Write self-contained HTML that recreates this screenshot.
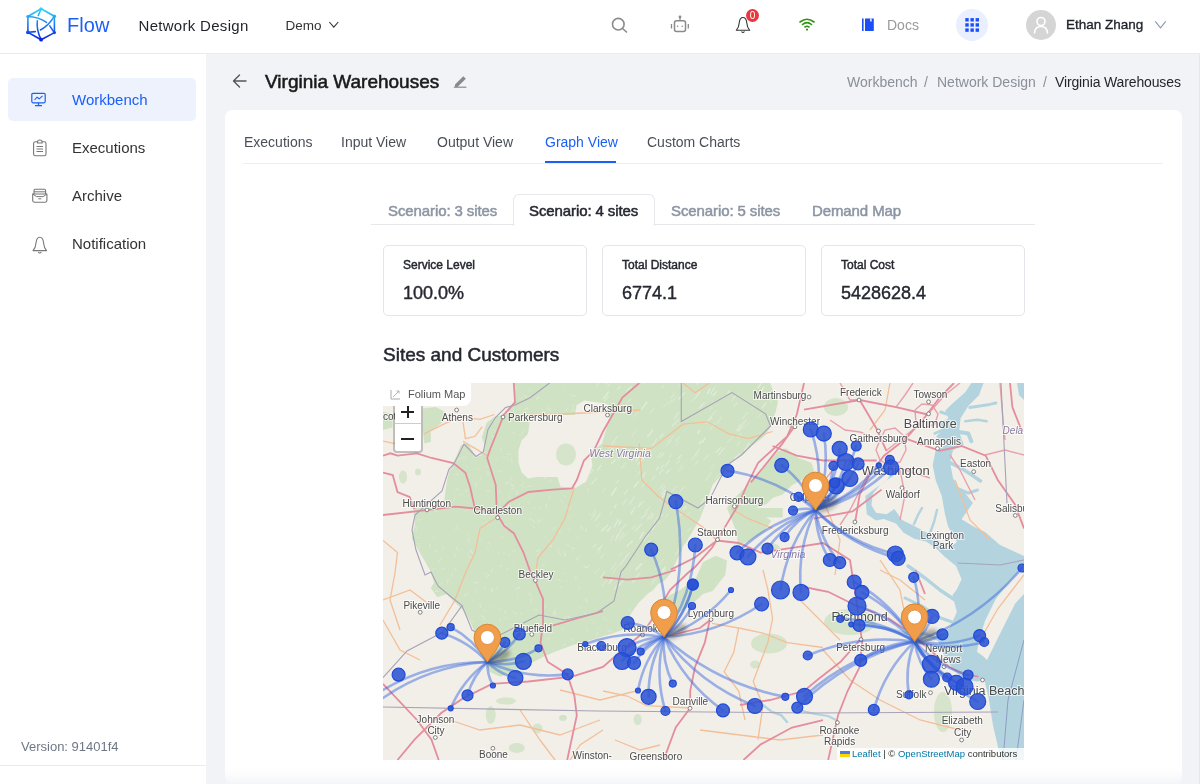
<!DOCTYPE html>
<html><head><meta charset="utf-8">
<style>
*{box-sizing:border-box;margin:0;padding:0}
html,body{width:1200px;height:784px;overflow:hidden;background:#f2f3f7;font-family:"Liberation Sans",sans-serif;color:#1f2329}
.abs{position:absolute;white-space:nowrap;line-height:1}
svg{position:absolute;overflow:visible}
#hdr{position:absolute;left:0;top:0;width:1200px;height:54px;background:#fff;border-bottom:1px solid #ebecf0}
#side{position:absolute;left:0;top:54px;width:206px;height:730px;background:#fff}
#card{position:absolute;left:225px;top:110px;width:957px;height:673px;background:#fff;border-radius:7px}
.st{font-size:15px;-webkit-text-stroke:0.5px;color:#8c95a3;letter-spacing:-0.1px}
.ml{font-size:12px;-webkit-text-stroke:0.45px;color:#262730}
.mv{font-size:18px;color:#262730;-webkit-text-stroke:0.4px}
.mc{position:absolute;top:245px;width:204px;height:71px;border:1px solid #e4e5ea;border-radius:5px;background:#fff}
</style></head>
<body>
<div id="root" style="position:absolute;left:0;top:0;width:1200px;height:784px;overflow:hidden;will-change:transform;background:#f2f3f7">
<div id="hdr">
  <!-- logo -->
  <svg style="left:0;top:0" width="60" height="54" viewBox="0 0 60 54">
    <defs><linearGradient id="lg" x1="0" y1="8" x2="0" y2="40" gradientUnits="userSpaceOnUse"><stop offset="0" stop-color="#30d8f8"/><stop offset="0.5" stop-color="#1f7cf2"/><stop offset="1" stop-color="#0a1ee0"/></linearGradient></defs>
    <g fill="none" stroke="url(#lg)" stroke-width="1.6" stroke-linecap="round" stroke-linejoin="round">
      <path d="M41.1 8.8 L54.4 16.2 L54.4 32.6 L41.1 39.7 L27.9 32.3 L27.9 16.5 Z"/>
      <path d="M27.9 16.5 Q38.5 16.8 46.5 22.4"/>
      <path d="M54.4 16.2 Q48.5 26 40.4 30"/>
      <path d="M41.1 39.7 Q36.3 30 37.3 20.8"/>
      <path d="M41.1 8.8 L38.3 15.5"/>
      <path d="M49.8 25.9 L53.6 31.6"/>
      <path d="M27.9 32.3 L35.3 31.6"/>
    </g>
    <g fill="url(#lg)"><circle cx="41.1" cy="8.8" r="1.6"/><circle cx="54.4" cy="16.2" r="1.6"/><circle cx="54.4" cy="32.6" r="1.6"/><circle cx="41.1" cy="39.7" r="1.9"/><circle cx="27.9" cy="32.3" r="1.9"/><circle cx="27.9" cy="16.5" r="1.6"/></g>
  </svg>
  <div class="abs" style="left:67px;top:15.3px;font-size:20px;color:#1b5ff5;letter-spacing:0.1px">Flow</div>
  <div class="abs" style="left:138.5px;top:18px;font-size:15px;color:#1f2329;letter-spacing:0.3px">Network Design</div>
  <div class="abs" style="left:285.5px;top:18.5px;font-size:13.5px;color:#333">Demo</div>
  <svg style="left:328px;top:21px" width="12" height="8"><path d="M1.3 1 L5.8 6.2 L10.3 1" fill="none" stroke="#333" stroke-width="1.1"/></svg>
  <!-- search -->
  <svg style="left:610px;top:15px" width="20" height="20"><circle cx="8.3" cy="9.2" r="5.8" fill="none" stroke="#8a8a8a" stroke-width="1.6"/><path d="M12.5 13.5 L16.5 17" stroke="#8a8a8a" stroke-width="1.6" stroke-linecap="round"/></svg>
  <!-- robot -->
  <svg style="left:670px;top:14px" width="20" height="20"><rect x="4.5" y="6.8" width="11" height="10.8" rx="2" fill="none" stroke="#8a8a8a" stroke-width="1.5"/><circle cx="10" cy="3" r="1.4" fill="#8a8a8a"/><path d="M10 4 V6.8" stroke="#8a8a8a" stroke-width="1.2"/><path d="M1.5 10 V14.5 M18.3 10 V14.5" stroke="#8a8a8a" stroke-width="1.3"/><circle cx="7.6" cy="12.3" r="0.8" fill="#8a8a8a"/><circle cx="12.2" cy="12.3" r="0.8" fill="#8a8a8a"/></svg>
  <!-- bell -->
  <svg style="left:734px;top:15px" width="18" height="20"><path d="M9 2.5 C6 2.5 5.5 5 5.2 8 C5 11 4.5 13 2.3 15.3 H15.7 C13.5 13 13 11 12.8 8 C12.5 5 12 2.5 9 2.5 Z" fill="none" stroke="#333" stroke-width="1.1" stroke-linejoin="round"/><path d="M7.5 16.5 Q9 18.6 10.5 16.5" fill="none" stroke="#333" stroke-width="1.1"/></svg>
  <div class="abs" style="left:746px;top:9px;width:13px;height:13px;border-radius:50%;background:#e8383d;color:#fff;font-size:10px;text-align:center;line-height:13px">0</div>
  <!-- wifi -->
  <svg style="left:798px;top:17px" width="18" height="14"><g fill="none" stroke="#2e9313" stroke-width="1.6" stroke-linecap="round"><path d="M2 5 Q9 -0.5 16 5"/><path d="M4.5 7.5 Q9 3.8 13.5 7.5"/><path d="M7 10 Q9 8.5 11 10"/></g><circle cx="9" cy="12.6" r="1.1" fill="#2e9313"/></svg>
  <!-- docs -->
  <svg style="left:860px;top:17px" width="16" height="16"><rect x="2" y="1.5" width="1.6" height="12.5" fill="#1b4ff5"/><rect x="5" y="1.5" width="8.8" height="12.5" fill="#1b4ff5"/><rect x="10.2" y="1.5" width="1.4" height="3" fill="#fff"/></svg>
  <div class="abs" style="left:887px;top:18px;font-size:14px;color:#9a9a9a">Docs</div>
  <!-- apps -->
  <div class="abs" style="left:956px;top:9px;width:32px;height:32px;border-radius:50%;background:#e9effe"></div>
  <svg style="left:964px;top:17px" width="16" height="16"><g fill="#1b4ff5"><rect x="1.30" y="1.10" width="3.4" height="3.4"/><rect x="6.45" y="1.10" width="3.4" height="3.4"/><rect x="11.60" y="1.10" width="3.4" height="3.4"/><rect x="1.30" y="6.25" width="3.4" height="3.4"/><rect x="6.45" y="6.25" width="3.4" height="3.4"/><rect x="11.60" y="6.25" width="3.4" height="3.4"/><rect x="1.30" y="11.40" width="3.4" height="3.4"/><rect x="6.45" y="11.40" width="3.4" height="3.4"/><rect x="11.60" y="11.40" width="3.4" height="3.4"/></g></svg>
  <!-- avatar -->
  <div class="abs" style="left:1026px;top:10px;width:30px;height:30px;border-radius:50%;background:#d5d5d5"></div>
  <svg style="left:1026px;top:10px" width="30" height="30"><circle cx="15" cy="11.5" r="4" fill="none" stroke="#fff" stroke-width="1.6"/><path d="M8.5 23 Q9 16.5 15 16.5 Q21 16.5 21.5 23" fill="none" stroke="#fff" stroke-width="1.6" stroke-linecap="round"/></svg>
  <div class="abs" style="left:1066px;top:18px;font-size:13.5px;color:#1f2329;-webkit-text-stroke:0.35px">Ethan Zhang</div>
  <svg style="left:1154px;top:20px" width="13" height="10"><path d="M1.3 1.3 L6.5 7.8 L11.7 1.3" fill="none" stroke="#8c96b0" stroke-width="1.1"/></svg>
</div>

<div id="side">
  <div class="abs" style="left:8px;top:23.5px;width:188px;height:43px;background:#edf2fd;border-radius:5px"></div>
  <!-- monitor icon -->
  <svg style="left:30px;top:38px" width="18" height="16"><rect x="1.8" y="1.3" width="13.4" height="9.5" rx="1.2" fill="none" stroke="#1b5ff5" stroke-width="1.2"/><path d="M4.5 8 L7 5.2 L9.3 6.8 L12.5 3.8" fill="none" stroke="#1b5ff5" stroke-width="1.1"/><path d="M8.5 10.8 V13.2 M5 13.6 H12" stroke="#1b5ff5" stroke-width="1.2"/></svg>
  <div class="abs" style="left:72px;top:38px;font-size:15px;color:#1b5ff5">Workbench</div>
  <!-- clipboard -->
  <svg style="left:31px;top:85px" width="18" height="18"><rect x="2.6" y="2.8" width="12.4" height="14" rx="1.8" fill="none" stroke="#777" stroke-width="1.1"/><path d="M6.5 3 Q6.5 1 8.8 1 Q11.1 1 11.1 3 V4 H6.5 Z" fill="#fff" stroke="#777" stroke-width="1.1"/><path d="M5.5 7.5 H12 M5.5 10 H12 M5.5 12.5 H12" stroke="#777" stroke-width="1"/></svg>
  <div class="abs" style="left:72px;top:86px;font-size:15px;color:#333">Executions</div>
  <!-- archive -->
  <svg style="left:31px;top:133px" width="18" height="18"><path d="M1.7 7 V13.6 Q1.7 15.2 3.3 15.2 H14.3 Q15.9 15.2 15.9 13.6 V7 Z" fill="none" stroke="#777" stroke-width="1.1" stroke-linejoin="round"/><path d="M3 7 V3.5 Q3 2.2 4.3 2.2 H13.3 Q14.6 2.2 14.6 3.5 V7" fill="none" stroke="#777" stroke-width="1.1"/><path d="M3 4.8 H14.6" stroke="#777" stroke-width="1"/><path d="M1.7 7 L5.5 9.6 H12.1 L15.9 7" fill="none" stroke="#777" stroke-width="1"/><path d="M7.3 11.8 H10.3" stroke="#777" stroke-width="1"/></svg>
  <div class="abs" style="left:72px;top:134px;font-size:15px;color:#333">Archive</div>
  <!-- bell -->
  <svg style="left:31px;top:181px" width="18" height="20"><path d="M8.8 2.2 C5.8 2.2 5.3 4.8 5 8 C4.8 11 4.3 13.3 2 15.6 H15.6 C13.3 13.3 12.8 11 12.6 8 C12.3 4.8 11.8 2.2 8.8 2.2 Z" fill="none" stroke="#777" stroke-width="1.1" stroke-linejoin="round"/><path d="M7.2 17 Q8.8 19 10.4 17" fill="none" stroke="#777" stroke-width="1.1"/></svg>
  <div class="abs" style="left:72px;top:182px;font-size:15px;color:#333">Notification</div>
  <div class="abs" style="left:21px;top:686px;font-size:13px;color:#6f7787">Version: 91401f4</div>
  <div class="abs" style="left:0;top:711px;width:206px;height:1px;background:#ececec"></div>
</div>

<!-- title row -->
<svg style="left:231px;top:72px" width="18" height="18"><path d="M15 9 H3 M8.5 3 L2.5 9 L8.5 15" fill="none" stroke="#555" stroke-width="1.4" stroke-linecap="round" stroke-linejoin="round"/></svg>
<div class="abs" style="left:265px;top:72px;font-size:19px;color:#1a1a1a;-webkit-text-stroke:0.55px">Virginia Warehouses</div>
<svg style="left:452px;top:74px" width="16" height="16"><path d="M3 10.5 L11.3 2.2 L13.8 4.7 L5.5 13 H3 Z" fill="#8a8a8a"/><rect x="1.8" y="12.6" width="12.6" height="1.2" fill="#8a8a8a"/></svg>
<div class="abs" style="left:847px;top:75px;font-size:14px;color:#8a8f99">Workbench</div>
<div class="abs" style="left:924px;top:75px;font-size:14px;color:#8a8f99">/</div>
<div class="abs" style="left:937px;top:75px;font-size:14px;color:#8a8f99">Network Design</div>
<div class="abs" style="left:1043px;top:75px;font-size:14px;color:#8a8f99">/</div>
<div class="abs" style="left:1055px;top:75px;font-size:14px;color:#1f2329;letter-spacing:-0.14px">Virginia Warehouses</div>

<div id="card"></div>
<div class="abs" style="left:1199px;top:54px;width:1px;height:730px;background:#e6e7ec"></div>
<!-- nav tabs -->
<div class="abs" style="left:244px;top:135px;font-size:14px;color:#4a4f57">Executions</div>
<div class="abs" style="left:341px;top:135px;font-size:14px;color:#4a4f57">Input View</div>
<div class="abs" style="left:437px;top:135px;font-size:14px;color:#4a4f57">Output View</div>
<div class="abs" style="left:545px;top:135px;font-size:14px;color:#1b5ff5">Graph View</div>
<div class="abs" style="left:647px;top:135px;font-size:14px;color:#4a4f57">Custom Charts</div>
<div class="abs" style="left:243px;top:163px;width:920px;height:1px;background:#eceef1"></div>
<div class="abs" style="left:545px;top:161px;width:71px;height:2px;background:#1b5ff5"></div>

<!-- scenario tabs -->
<div class="abs" style="left:371px;top:224px;width:664px;height:1px;background:#e6e8ec"></div>
<div class="abs" style="left:513px;top:193.5px;width:142px;height:32px;border:1px solid #e6e8ec;border-bottom:none;border-radius:6px 6px 0 0;background:#fff"></div>
<div class="abs st" style="left:388px;top:203px">Scenario: 3 sites</div>
<div class="abs st" style="left:529px;top:203px;color:#262730">Scenario: 4 sites</div>
<div class="abs st" style="left:671px;top:203px">Scenario: 5 sites</div>
<div class="abs st" style="left:812px;top:203px">Demand Map</div>

<!-- metrics -->
<div class="mc" style="left:383px"></div>
<div class="mc" style="left:602px"></div>
<div class="mc" style="left:821px"></div>
<div class="abs ml" style="left:403px;top:259px">Service Level</div>
<div class="abs mv" style="left:403px;top:284px">100.0%</div>
<div class="abs ml" style="left:622px;top:259px">Total Distance</div>
<div class="abs mv" style="left:622px;top:284px">6774.1</div>
<div class="abs ml" style="left:841px;top:259px">Total Cost</div>
<div class="abs mv" style="left:841px;top:284px">5428628.4</div>

<div class="abs" style="left:383px;top:345px;font-size:19px;color:#262730;-webkit-text-stroke:0.5px">Sites and Customers</div>

<div class="abs" style="left:225px;top:768px;width:957px;height:16px;background:linear-gradient(rgba(250,250,252,0),rgba(244,245,248,0.9))"></div>
<!-- MAP -->
<div id="map" style="position:absolute;left:383px;top:383px;width:641px;height:377px;background:#f2efe9;overflow:hidden">
<svg width="641" height="377" viewBox="383 383 641 377" style="position:absolute;left:0;top:0">
<defs><filter id="blur" x="-50%" y="-50%" width="200%" height="200%"><feGaussianBlur stdDeviation="2"/></filter></defs>
<rect x="383" y="383" width="641" height="377" fill="#f2efe9"/>
<polygon points="513.7,383.0 770.0,383.0 778.0,402.0 773.0,422.8 765.0,435.6 750.8,446.7 739.7,456.3 731.7,462.7 723.7,472.2 712.6,485.0 700.0,518.7 683.0,547.8 676.0,562.0 670.8,573.0 665.0,580.0 657.7,584.5 653.3,590.0 648.3,593.3 638.3,603.3 630.0,615.0 626.7,628.3 613.3,633.3 596.7,638.3 573.3,645.0 555.0,651.7 543.3,656.7 521.7,668.3 500.0,676.7 490.0,672.0 484.0,660.0 478.0,645.0 475.4,633.0 469.0,619.6 462.7,610.0 453.1,600.4 446.7,594.0 437.2,597.2 430.8,587.7 434.0,583.0 430.8,571.7 424.4,560.6 419.7,552.6 411.7,538.3 414.9,524.0 413.3,508.0 443.6,506.0 446.7,481.8 450.0,469.0 456.3,456.3 461.0,445.0 467.5,443.6 472.2,450.0 475.4,458.0 481.8,454.7 485.0,446.7 481.8,437.2 486.6,422.8 494.6,416.5 504.0,415.0 510.5,407.0 515.3,399.0" fill="#d0e2c4"/>
<polygon points="515.3,421.2 523.2,419.7 529.6,422.8 528.0,434.0 521.6,440.4 518.5,450.0 518.5,462.7 521.6,472.2 528.0,478.6 536.0,477.0 543.0,477.0 557.3,477.0 560.5,486.6 574.9,488.2 586.0,481.8 592.4,465.9 590.8,453.0 602.0,443.6 606.7,427.6 610.0,414.9 606.7,403.7 584.4,400.5 576.5,405.3 574.9,414.9 543.0,414.9" fill="#f2efe9"/>
<polygon points="778.0,451.5 785.9,448.3 798.6,458.0 811.4,462.7 814.6,472.2 805.0,478.6 792.2,485.0 782.7,494.6 773.0,497.7 766.7,504.0 755.6,508.0 726.9,508.0 734.9,497.7 747.6,485.0 760.4,472.2 770.0,459.5" fill="#d0e2c4"/>
<polygon points="742.8,517.6 760.4,514.4 771.5,520.7 763.6,532.0 750.8,540.0 738.0,546.2 736.5,532.0 726.9,508.0 755.6,508.0 782.7,508.0 782.7,517.6" fill="#d0e2c4"/>
<polygon points="703.0,562.0 715.7,555.8 727.0,560.6 725.3,575.0 712.6,590.9 703.0,594.0 690.0,606.0 680.0,612.0 668.0,615.0 660.0,600.0 680.0,590.0 696.0,578.0" fill="#d0e2c4"/>
<polygon points="422.8,408.5 435.6,407.0 445.0,411.7 442.0,422.8 430.8,430.8 430.8,442.0 424.4,443.6 422.8,430.8" fill="#d0e2c4"/>
<polygon points="383.0,411.7 392.6,414.0 392.6,427.6 383.0,430.0" fill="#d0e2c4"/>
<line x1="668.9" y1="404.5" x2="672.5" y2="399.5" stroke="#f4f6ee" stroke-opacity="0.27" stroke-width="1.2" stroke-linecap="round"/>
<line x1="429.6" y1="511.8" x2="427.8" y2="510.6" stroke="#f4f6ee" stroke-opacity="0.23" stroke-width="1.5" stroke-linecap="round"/>
<line x1="463.3" y1="449.3" x2="460.2" y2="450.4" stroke="#f4f6ee" stroke-opacity="0.27" stroke-width="1.1" stroke-linecap="round"/>
<line x1="535.3" y1="625.4" x2="537.4" y2="626.5" stroke="#f4f6ee" stroke-opacity="0.28" stroke-width="1.1" stroke-linecap="round"/>
<line x1="628.6" y1="401.6" x2="630.5" y2="398.8" stroke="#f4f6ee" stroke-opacity="0.45" stroke-width="1.1" stroke-linecap="round"/>
<line x1="537.5" y1="556.9" x2="538.4" y2="554.1" stroke="#f4f6ee" stroke-opacity="0.31" stroke-width="1.4" stroke-linecap="round"/>
<line x1="510.2" y1="553.6" x2="508.0" y2="555.8" stroke="#f4f6ee" stroke-opacity="0.30" stroke-width="1.0" stroke-linecap="round"/>
<line x1="578.1" y1="607.9" x2="580.4" y2="607.7" stroke="#f4f6ee" stroke-opacity="0.16" stroke-width="1.3" stroke-linecap="round"/>
<line x1="641.2" y1="518.5" x2="647.0" y2="512.9" stroke="#f4f6ee" stroke-opacity="0.39" stroke-width="1.3" stroke-linecap="round"/>
<line x1="438.7" y1="591.3" x2="435.4" y2="591.5" stroke="#f4f6ee" stroke-opacity="0.31" stroke-width="1.0" stroke-linecap="round"/>
<line x1="565.5" y1="581.6" x2="567.4" y2="581.1" stroke="#f4f6ee" stroke-opacity="0.18" stroke-width="0.9" stroke-linecap="round"/>
<line x1="465.4" y1="456.5" x2="463.5" y2="458.6" stroke="#f4f6ee" stroke-opacity="0.17" stroke-width="1.2" stroke-linecap="round"/>
<line x1="523.6" y1="506.3" x2="521.6" y2="508.2" stroke="#f4f6ee" stroke-opacity="0.34" stroke-width="0.9" stroke-linecap="round"/>
<line x1="483.7" y1="451.9" x2="486.2" y2="451.7" stroke="#f4f6ee" stroke-opacity="0.27" stroke-width="1.0" stroke-linecap="round"/>
<line x1="559.0" y1="551.2" x2="560.4" y2="554.8" stroke="#f4f6ee" stroke-opacity="0.25" stroke-width="1.3" stroke-linecap="round"/>
<line x1="678.7" y1="399.0" x2="684.5" y2="392.9" stroke="#f4f6ee" stroke-opacity="0.51" stroke-width="1.4" stroke-linecap="round"/>
<line x1="568.0" y1="501.5" x2="569.5" y2="503.1" stroke="#f4f6ee" stroke-opacity="0.16" stroke-width="0.9" stroke-linecap="round"/>
<line x1="496.4" y1="431.2" x2="493.9" y2="430.3" stroke="#f4f6ee" stroke-opacity="0.15" stroke-width="0.9" stroke-linecap="round"/>
<line x1="454.6" y1="491.0" x2="453.1" y2="492.5" stroke="#f4f6ee" stroke-opacity="0.27" stroke-width="0.9" stroke-linecap="round"/>
<line x1="513.4" y1="486.2" x2="511.4" y2="484.3" stroke="#f4f6ee" stroke-opacity="0.32" stroke-width="1.6" stroke-linecap="round"/>
<line x1="596.7" y1="526.7" x2="598.6" y2="523.7" stroke="#f4f6ee" stroke-opacity="0.35" stroke-width="1.0" stroke-linecap="round"/>
<line x1="738.3" y1="430.9" x2="740.5" y2="428.8" stroke="#f4f6ee" stroke-opacity="0.41" stroke-width="0.9" stroke-linecap="round"/>
<line x1="626.8" y1="391.0" x2="631.3" y2="386.8" stroke="#f4f6ee" stroke-opacity="0.51" stroke-width="1.4" stroke-linecap="round"/>
<line x1="516.8" y1="491.9" x2="516.5" y2="494.2" stroke="#f4f6ee" stroke-opacity="0.26" stroke-width="1.4" stroke-linecap="round"/>
<line x1="503.4" y1="536.7" x2="500.8" y2="536.2" stroke="#f4f6ee" stroke-opacity="0.16" stroke-width="1.0" stroke-linecap="round"/>
<line x1="516.1" y1="588.7" x2="519.8" y2="587.4" stroke="#f4f6ee" stroke-opacity="0.34" stroke-width="1.6" stroke-linecap="round"/>
<line x1="501.0" y1="450.4" x2="500.3" y2="448.1" stroke="#f4f6ee" stroke-opacity="0.27" stroke-width="1.5" stroke-linecap="round"/>
<line x1="448.1" y1="579.2" x2="447.3" y2="582.9" stroke="#f4f6ee" stroke-opacity="0.30" stroke-width="1.2" stroke-linecap="round"/>
<line x1="484.6" y1="617.4" x2="483.8" y2="619.9" stroke="#f4f6ee" stroke-opacity="0.34" stroke-width="1.1" stroke-linecap="round"/>
<line x1="697.7" y1="433.5" x2="699.7" y2="430.3" stroke="#f4f6ee" stroke-opacity="0.52" stroke-width="1.4" stroke-linecap="round"/>
<line x1="551.7" y1="546.0" x2="549.4" y2="545.7" stroke="#f4f6ee" stroke-opacity="0.34" stroke-width="1.3" stroke-linecap="round"/>
<line x1="737.2" y1="445.7" x2="739.8" y2="442.0" stroke="#f4f6ee" stroke-opacity="0.32" stroke-width="1.3" stroke-linecap="round"/>
<line x1="516.2" y1="507.4" x2="514.2" y2="508.7" stroke="#f4f6ee" stroke-opacity="0.22" stroke-width="1.2" stroke-linecap="round"/>
<line x1="610.6" y1="541.0" x2="613.7" y2="535.6" stroke="#f4f6ee" stroke-opacity="0.38" stroke-width="0.9" stroke-linecap="round"/>
<line x1="482.2" y1="523.6" x2="485.5" y2="524.8" stroke="#f4f6ee" stroke-opacity="0.22" stroke-width="1.2" stroke-linecap="round"/>
<line x1="456.4" y1="549.4" x2="456.8" y2="546.9" stroke="#f4f6ee" stroke-opacity="0.30" stroke-width="1.2" stroke-linecap="round"/>
<line x1="634.1" y1="608.7" x2="637.7" y2="607.4" stroke="#f4f6ee" stroke-opacity="0.27" stroke-width="1.2" stroke-linecap="round"/>
<line x1="614.7" y1="588.7" x2="618.3" y2="584.3" stroke="#f4f6ee" stroke-opacity="0.39" stroke-width="1.6" stroke-linecap="round"/>
<line x1="742.6" y1="423.7" x2="744.9" y2="420.8" stroke="#f4f6ee" stroke-opacity="0.27" stroke-width="1.0" stroke-linecap="round"/>
<line x1="443.5" y1="581.8" x2="440.7" y2="584.0" stroke="#f4f6ee" stroke-opacity="0.18" stroke-width="1.4" stroke-linecap="round"/>
<line x1="672.5" y1="425.5" x2="678.5" y2="419.8" stroke="#f4f6ee" stroke-opacity="0.32" stroke-width="1.6" stroke-linecap="round"/>
<line x1="570.3" y1="527.7" x2="568.4" y2="531.2" stroke="#f4f6ee" stroke-opacity="0.18" stroke-width="1.1" stroke-linecap="round"/>
<line x1="616.1" y1="483.7" x2="618.5" y2="480.3" stroke="#f4f6ee" stroke-opacity="0.47" stroke-width="0.8" stroke-linecap="round"/>
<line x1="631.1" y1="513.8" x2="632.9" y2="511.3" stroke="#f4f6ee" stroke-opacity="0.44" stroke-width="1.2" stroke-linecap="round"/>
<line x1="455.9" y1="461.9" x2="455.5" y2="463.9" stroke="#f4f6ee" stroke-opacity="0.20" stroke-width="0.9" stroke-linecap="round"/>
<line x1="734.4" y1="459.8" x2="737.2" y2="457.1" stroke="#f4f6ee" stroke-opacity="0.42" stroke-width="1.4" stroke-linecap="round"/>
<line x1="683.4" y1="509.3" x2="685.9" y2="506.9" stroke="#f4f6ee" stroke-opacity="0.44" stroke-width="1.4" stroke-linecap="round"/>
<line x1="592.0" y1="483.7" x2="596.5" y2="479.3" stroke="#f4f6ee" stroke-opacity="0.33" stroke-width="0.9" stroke-linecap="round"/>
<line x1="620.5" y1="453.8" x2="622.5" y2="450.7" stroke="#f4f6ee" stroke-opacity="0.27" stroke-width="1.0" stroke-linecap="round"/>
<line x1="711.2" y1="469.1" x2="714.5" y2="464.1" stroke="#f4f6ee" stroke-opacity="0.35" stroke-width="0.8" stroke-linecap="round"/>
<line x1="488.9" y1="524.0" x2="485.9" y2="521.6" stroke="#f4f6ee" stroke-opacity="0.31" stroke-width="1.1" stroke-linecap="round"/>
<line x1="608.1" y1="630.9" x2="610.8" y2="631.0" stroke="#f4f6ee" stroke-opacity="0.29" stroke-width="1.6" stroke-linecap="round"/>
<line x1="548.7" y1="630.2" x2="550.9" y2="632.8" stroke="#f4f6ee" stroke-opacity="0.23" stroke-width="1.1" stroke-linecap="round"/>
<line x1="514.7" y1="431.5" x2="513.5" y2="433.3" stroke="#f4f6ee" stroke-opacity="0.32" stroke-width="1.3" stroke-linecap="round"/>
<line x1="529.3" y1="519.5" x2="531.5" y2="518.7" stroke="#f4f6ee" stroke-opacity="0.20" stroke-width="1.6" stroke-linecap="round"/>
<line x1="510.3" y1="669.8" x2="512.0" y2="667.8" stroke="#f4f6ee" stroke-opacity="0.15" stroke-width="1.1" stroke-linecap="round"/>
<line x1="600.1" y1="532.3" x2="602.7" y2="529.0" stroke="#f4f6ee" stroke-opacity="0.25" stroke-width="1.0" stroke-linecap="round"/>
<line x1="450.0" y1="501.7" x2="447.9" y2="501.4" stroke="#f4f6ee" stroke-opacity="0.21" stroke-width="1.0" stroke-linecap="round"/>
<line x1="643.4" y1="540.2" x2="648.3" y2="534.5" stroke="#f4f6ee" stroke-opacity="0.46" stroke-width="1.5" stroke-linecap="round"/>
<line x1="469.3" y1="538.6" x2="467.8" y2="541.1" stroke="#f4f6ee" stroke-opacity="0.31" stroke-width="1.5" stroke-linecap="round"/>
<line x1="466.9" y1="490.1" x2="465.8" y2="492.0" stroke="#f4f6ee" stroke-opacity="0.26" stroke-width="1.3" stroke-linecap="round"/>
<line x1="605.8" y1="384.0" x2="611.1" y2="378.3" stroke="#f4f6ee" stroke-opacity="0.40" stroke-width="1.2" stroke-linecap="round"/>
<line x1="672.1" y1="402.6" x2="676.3" y2="396.5" stroke="#f4f6ee" stroke-opacity="0.27" stroke-width="1.0" stroke-linecap="round"/>
<line x1="699.4" y1="443.9" x2="704.8" y2="438.8" stroke="#f4f6ee" stroke-opacity="0.40" stroke-width="1.1" stroke-linecap="round"/>
<line x1="601.8" y1="586.1" x2="606.7" y2="580.3" stroke="#f4f6ee" stroke-opacity="0.44" stroke-width="0.9" stroke-linecap="round"/>
<line x1="472.5" y1="458.4" x2="473.7" y2="455.1" stroke="#f4f6ee" stroke-opacity="0.26" stroke-width="0.8" stroke-linecap="round"/>
<line x1="678.5" y1="469.4" x2="682.3" y2="464.6" stroke="#f4f6ee" stroke-opacity="0.39" stroke-width="0.9" stroke-linecap="round"/>
<line x1="421.8" y1="519.3" x2="418.3" y2="520.0" stroke="#f4f6ee" stroke-opacity="0.24" stroke-width="1.0" stroke-linecap="round"/>
<line x1="496.8" y1="663.8" x2="498.9" y2="665.0" stroke="#f4f6ee" stroke-opacity="0.18" stroke-width="1.2" stroke-linecap="round"/>
<line x1="505.2" y1="649.6" x2="502.3" y2="649.2" stroke="#f4f6ee" stroke-opacity="0.15" stroke-width="1.2" stroke-linecap="round"/>
<line x1="590.8" y1="472.7" x2="593.0" y2="469.6" stroke="#f4f6ee" stroke-opacity="0.34" stroke-width="1.5" stroke-linecap="round"/>
<line x1="742.3" y1="418.7" x2="748.0" y2="412.3" stroke="#f4f6ee" stroke-opacity="0.52" stroke-width="1.0" stroke-linecap="round"/>
<line x1="560.2" y1="499.7" x2="563.6" y2="501.8" stroke="#f4f6ee" stroke-opacity="0.22" stroke-width="1.1" stroke-linecap="round"/>
<line x1="522.3" y1="397.3" x2="521.2" y2="399.2" stroke="#f4f6ee" stroke-opacity="0.21" stroke-width="1.5" stroke-linecap="round"/>
<line x1="512.2" y1="461.9" x2="511.1" y2="459.1" stroke="#f4f6ee" stroke-opacity="0.22" stroke-width="1.6" stroke-linecap="round"/>
<line x1="695.6" y1="397.7" x2="700.1" y2="391.8" stroke="#f4f6ee" stroke-opacity="0.48" stroke-width="1.3" stroke-linecap="round"/>
<line x1="526.6" y1="397.5" x2="523.9" y2="394.8" stroke="#f4f6ee" stroke-opacity="0.24" stroke-width="1.1" stroke-linecap="round"/>
<line x1="531.1" y1="602.5" x2="531.4" y2="598.5" stroke="#f4f6ee" stroke-opacity="0.28" stroke-width="1.0" stroke-linecap="round"/>
<line x1="632.4" y1="500.1" x2="634.5" y2="496.8" stroke="#f4f6ee" stroke-opacity="0.31" stroke-width="1.5" stroke-linecap="round"/>
<line x1="608.9" y1="448.3" x2="615.0" y2="442.6" stroke="#f4f6ee" stroke-opacity="0.38" stroke-width="0.9" stroke-linecap="round"/>
<line x1="548.4" y1="410.1" x2="548.5" y2="407.6" stroke="#f4f6ee" stroke-opacity="0.26" stroke-width="1.5" stroke-linecap="round"/>
<line x1="576.4" y1="538.7" x2="577.9" y2="536.3" stroke="#f4f6ee" stroke-opacity="0.16" stroke-width="1.0" stroke-linecap="round"/>
<line x1="611.3" y1="570.0" x2="615.8" y2="563.2" stroke="#f4f6ee" stroke-opacity="0.33" stroke-width="1.0" stroke-linecap="round"/>
<line x1="570.9" y1="515.4" x2="568.6" y2="518.6" stroke="#f4f6ee" stroke-opacity="0.32" stroke-width="0.8" stroke-linecap="round"/>
<line x1="644.0" y1="383.1" x2="647.8" y2="379.3" stroke="#f4f6ee" stroke-opacity="0.50" stroke-width="1.5" stroke-linecap="round"/>
<line x1="618.7" y1="585.6" x2="624.5" y2="579.2" stroke="#f4f6ee" stroke-opacity="0.44" stroke-width="1.4" stroke-linecap="round"/>
<line x1="593.4" y1="546.8" x2="595.6" y2="544.4" stroke="#f4f6ee" stroke-opacity="0.32" stroke-width="1.5" stroke-linecap="round"/>
<line x1="666.7" y1="473.2" x2="668.9" y2="470.1" stroke="#f4f6ee" stroke-opacity="0.44" stroke-width="1.4" stroke-linecap="round"/>
<line x1="619.5" y1="556.1" x2="622.5" y2="551.7" stroke="#f4f6ee" stroke-opacity="0.43" stroke-width="0.8" stroke-linecap="round"/>
<line x1="532.6" y1="519.8" x2="535.0" y2="522.9" stroke="#f4f6ee" stroke-opacity="0.33" stroke-width="1.2" stroke-linecap="round"/>
<line x1="506.6" y1="456.4" x2="507.7" y2="460.1" stroke="#f4f6ee" stroke-opacity="0.21" stroke-width="0.8" stroke-linecap="round"/>
<line x1="609.3" y1="583.3" x2="612.4" y2="578.8" stroke="#f4f6ee" stroke-opacity="0.45" stroke-width="1.5" stroke-linecap="round"/>
<line x1="546.8" y1="507.9" x2="545.8" y2="504.7" stroke="#f4f6ee" stroke-opacity="0.31" stroke-width="1.4" stroke-linecap="round"/>
<line x1="611.9" y1="443.9" x2="617.0" y2="436.7" stroke="#f4f6ee" stroke-opacity="0.50" stroke-width="1.0" stroke-linecap="round"/>
<line x1="501.4" y1="608.9" x2="498.9" y2="609.6" stroke="#f4f6ee" stroke-opacity="0.25" stroke-width="0.9" stroke-linecap="round"/>
<line x1="502.1" y1="506.9" x2="498.9" y2="507.9" stroke="#f4f6ee" stroke-opacity="0.18" stroke-width="1.1" stroke-linecap="round"/>
<line x1="498.1" y1="672.3" x2="495.9" y2="671.6" stroke="#f4f6ee" stroke-opacity="0.16" stroke-width="1.1" stroke-linecap="round"/>
<line x1="487.3" y1="661.0" x2="483.9" y2="660.3" stroke="#f4f6ee" stroke-opacity="0.28" stroke-width="1.1" stroke-linecap="round"/>
<line x1="524.1" y1="487.4" x2="521.3" y2="484.6" stroke="#f4f6ee" stroke-opacity="0.34" stroke-width="1.0" stroke-linecap="round"/>
<line x1="554.1" y1="627.0" x2="557.4" y2="625.5" stroke="#f4f6ee" stroke-opacity="0.16" stroke-width="1.2" stroke-linecap="round"/>
<line x1="490.3" y1="491.2" x2="486.6" y2="490.5" stroke="#f4f6ee" stroke-opacity="0.23" stroke-width="1.4" stroke-linecap="round"/>
<line x1="714.0" y1="395.1" x2="715.6" y2="392.3" stroke="#f4f6ee" stroke-opacity="0.53" stroke-width="1.0" stroke-linecap="round"/>
<line x1="517.2" y1="595.8" x2="517.7" y2="593.2" stroke="#f4f6ee" stroke-opacity="0.15" stroke-width="1.4" stroke-linecap="round"/>
<line x1="506.2" y1="524.1" x2="502.5" y2="525.3" stroke="#f4f6ee" stroke-opacity="0.23" stroke-width="1.0" stroke-linecap="round"/>
<line x1="582.7" y1="529.6" x2="581.1" y2="526.0" stroke="#f4f6ee" stroke-opacity="0.31" stroke-width="1.4" stroke-linecap="round"/>
<line x1="651.8" y1="480.4" x2="654.7" y2="476.4" stroke="#f4f6ee" stroke-opacity="0.48" stroke-width="0.9" stroke-linecap="round"/>
<line x1="492.0" y1="606.6" x2="489.7" y2="605.6" stroke="#f4f6ee" stroke-opacity="0.16" stroke-width="1.2" stroke-linecap="round"/>
<line x1="518.3" y1="408.0" x2="520.5" y2="408.0" stroke="#f4f6ee" stroke-opacity="0.29" stroke-width="1.2" stroke-linecap="round"/>
<line x1="506.3" y1="506.8" x2="507.8" y2="509.7" stroke="#f4f6ee" stroke-opacity="0.30" stroke-width="1.5" stroke-linecap="round"/>
<line x1="674.1" y1="419.0" x2="678.7" y2="412.4" stroke="#f4f6ee" stroke-opacity="0.42" stroke-width="1.1" stroke-linecap="round"/>
<line x1="702.8" y1="442.2" x2="705.4" y2="438.4" stroke="#f4f6ee" stroke-opacity="0.30" stroke-width="1.5" stroke-linecap="round"/>
<line x1="640.5" y1="479.9" x2="644.5" y2="476.2" stroke="#f4f6ee" stroke-opacity="0.40" stroke-width="1.0" stroke-linecap="round"/>
<line x1="600.2" y1="626.3" x2="597.0" y2="628.2" stroke="#f4f6ee" stroke-opacity="0.16" stroke-width="1.0" stroke-linecap="round"/>
<line x1="516.4" y1="614.0" x2="513.3" y2="611.6" stroke="#f4f6ee" stroke-opacity="0.27" stroke-width="1.3" stroke-linecap="round"/>
<line x1="499.9" y1="492.5" x2="499.2" y2="490.3" stroke="#f4f6ee" stroke-opacity="0.20" stroke-width="1.3" stroke-linecap="round"/>
<line x1="669.1" y1="443.4" x2="670.9" y2="440.9" stroke="#f4f6ee" stroke-opacity="0.45" stroke-width="0.9" stroke-linecap="round"/>
<line x1="569.2" y1="546.4" x2="566.4" y2="544.6" stroke="#f4f6ee" stroke-opacity="0.18" stroke-width="1.4" stroke-linecap="round"/>
<line x1="536.8" y1="551.3" x2="539.2" y2="549.9" stroke="#f4f6ee" stroke-opacity="0.32" stroke-width="1.6" stroke-linecap="round"/>
<line x1="698.9" y1="443.5" x2="701.1" y2="441.4" stroke="#f4f6ee" stroke-opacity="0.38" stroke-width="1.5" stroke-linecap="round"/>
<line x1="420.8" y1="546.8" x2="418.0" y2="548.6" stroke="#f4f6ee" stroke-opacity="0.17" stroke-width="1.3" stroke-linecap="round"/>
<line x1="559.6" y1="532.8" x2="560.1" y2="530.6" stroke="#f4f6ee" stroke-opacity="0.25" stroke-width="1.5" stroke-linecap="round"/>
<line x1="457.4" y1="528.7" x2="453.9" y2="529.4" stroke="#f4f6ee" stroke-opacity="0.19" stroke-width="0.9" stroke-linecap="round"/>
<line x1="603.3" y1="398.9" x2="608.4" y2="392.0" stroke="#f4f6ee" stroke-opacity="0.52" stroke-width="1.3" stroke-linecap="round"/>
<line x1="736.6" y1="430.6" x2="740.9" y2="424.2" stroke="#f4f6ee" stroke-opacity="0.37" stroke-width="1.5" stroke-linecap="round"/>
<line x1="738.4" y1="437.3" x2="741.0" y2="433.9" stroke="#f4f6ee" stroke-opacity="0.41" stroke-width="1.1" stroke-linecap="round"/>
<line x1="463.0" y1="456.4" x2="460.2" y2="458.5" stroke="#f4f6ee" stroke-opacity="0.16" stroke-width="1.2" stroke-linecap="round"/>
<line x1="710.4" y1="394.3" x2="714.6" y2="387.5" stroke="#f4f6ee" stroke-opacity="0.43" stroke-width="1.2" stroke-linecap="round"/>
<line x1="659.5" y1="473.9" x2="663.1" y2="469.7" stroke="#f4f6ee" stroke-opacity="0.38" stroke-width="1.3" stroke-linecap="round"/>
<line x1="589.2" y1="513.2" x2="590.8" y2="514.6" stroke="#f4f6ee" stroke-opacity="0.25" stroke-width="1.0" stroke-linecap="round"/>
<line x1="465.1" y1="510.9" x2="467.1" y2="510.1" stroke="#f4f6ee" stroke-opacity="0.25" stroke-width="0.8" stroke-linecap="round"/>
<line x1="663.2" y1="407.4" x2="668.3" y2="402.0" stroke="#f4f6ee" stroke-opacity="0.40" stroke-width="0.8" stroke-linecap="round"/>
<line x1="611.5" y1="495.2" x2="616.2" y2="487.9" stroke="#f4f6ee" stroke-opacity="0.51" stroke-width="1.6" stroke-linecap="round"/>
<line x1="709.9" y1="430.2" x2="714.7" y2="423.3" stroke="#f4f6ee" stroke-opacity="0.49" stroke-width="0.9" stroke-linecap="round"/>
<line x1="496.2" y1="461.1" x2="497.5" y2="458.3" stroke="#f4f6ee" stroke-opacity="0.16" stroke-width="0.9" stroke-linecap="round"/>
<line x1="480.8" y1="616.1" x2="483.0" y2="616.5" stroke="#f4f6ee" stroke-opacity="0.28" stroke-width="1.1" stroke-linecap="round"/>
<line x1="660.6" y1="500.1" x2="665.0" y2="493.7" stroke="#f4f6ee" stroke-opacity="0.55" stroke-width="1.3" stroke-linecap="round"/>
<line x1="555.5" y1="610.1" x2="554.2" y2="607.5" stroke="#f4f6ee" stroke-opacity="0.30" stroke-width="0.8" stroke-linecap="round"/>
<line x1="734.7" y1="458.3" x2="739.7" y2="453.7" stroke="#f4f6ee" stroke-opacity="0.43" stroke-width="1.3" stroke-linecap="round"/>
<line x1="536.9" y1="383.5" x2="535.7" y2="381.9" stroke="#f4f6ee" stroke-opacity="0.27" stroke-width="1.1" stroke-linecap="round"/>
<line x1="466.5" y1="450.5" x2="463.2" y2="450.0" stroke="#f4f6ee" stroke-opacity="0.15" stroke-width="1.1" stroke-linecap="round"/>
<line x1="456.5" y1="489.1" x2="458.6" y2="490.3" stroke="#f4f6ee" stroke-opacity="0.27" stroke-width="1.0" stroke-linecap="round"/>
<line x1="658.3" y1="524.0" x2="661.1" y2="521.4" stroke="#f4f6ee" stroke-opacity="0.32" stroke-width="0.9" stroke-linecap="round"/>
<line x1="452.4" y1="572.5" x2="451.6" y2="576.2" stroke="#f4f6ee" stroke-opacity="0.23" stroke-width="1.0" stroke-linecap="round"/>
<line x1="634.3" y1="487.0" x2="638.5" y2="481.6" stroke="#f4f6ee" stroke-opacity="0.53" stroke-width="1.4" stroke-linecap="round"/>
<line x1="511.9" y1="651.3" x2="514.0" y2="651.8" stroke="#f4f6ee" stroke-opacity="0.23" stroke-width="1.0" stroke-linecap="round"/>
<line x1="419.8" y1="546.6" x2="417.4" y2="543.6" stroke="#f4f6ee" stroke-opacity="0.19" stroke-width="1.3" stroke-linecap="round"/>
<line x1="612.7" y1="573.5" x2="617.0" y2="566.9" stroke="#f4f6ee" stroke-opacity="0.34" stroke-width="1.0" stroke-linecap="round"/>
<line x1="545.9" y1="605.6" x2="543.9" y2="608.4" stroke="#f4f6ee" stroke-opacity="0.29" stroke-width="1.0" stroke-linecap="round"/>
<line x1="631.0" y1="512.5" x2="635.8" y2="506.5" stroke="#f4f6ee" stroke-opacity="0.33" stroke-width="1.3" stroke-linecap="round"/>
<line x1="758.2" y1="387.5" x2="760.8" y2="383.7" stroke="#f4f6ee" stroke-opacity="0.47" stroke-width="1.6" stroke-linecap="round"/>
<line x1="706.0" y1="480.1" x2="710.8" y2="473.3" stroke="#f4f6ee" stroke-opacity="0.32" stroke-width="1.5" stroke-linecap="round"/>
<line x1="598.1" y1="632.4" x2="596.0" y2="635.0" stroke="#f4f6ee" stroke-opacity="0.24" stroke-width="1.4" stroke-linecap="round"/>
<line x1="637.4" y1="474.4" x2="640.2" y2="471.2" stroke="#f4f6ee" stroke-opacity="0.27" stroke-width="1.5" stroke-linecap="round"/>
<line x1="440.6" y1="558.4" x2="439.5" y2="560.9" stroke="#f4f6ee" stroke-opacity="0.31" stroke-width="1.5" stroke-linecap="round"/>
<line x1="661.3" y1="468.3" x2="663.2" y2="465.3" stroke="#f4f6ee" stroke-opacity="0.48" stroke-width="1.0" stroke-linecap="round"/>
<line x1="539.5" y1="508.9" x2="539.6" y2="506.8" stroke="#f4f6ee" stroke-opacity="0.21" stroke-width="1.4" stroke-linecap="round"/>
<line x1="585.2" y1="612.6" x2="586.0" y2="615.2" stroke="#f4f6ee" stroke-opacity="0.26" stroke-width="1.0" stroke-linecap="round"/>
<line x1="751.3" y1="410.0" x2="755.6" y2="403.3" stroke="#f4f6ee" stroke-opacity="0.25" stroke-width="1.0" stroke-linecap="round"/>
<line x1="416.7" y1="528.8" x2="415.8" y2="531.6" stroke="#f4f6ee" stroke-opacity="0.19" stroke-width="1.2" stroke-linecap="round"/>
<line x1="550.4" y1="630.1" x2="548.0" y2="630.9" stroke="#f4f6ee" stroke-opacity="0.21" stroke-width="1.0" stroke-linecap="round"/>
<line x1="687.8" y1="531.0" x2="690.2" y2="528.2" stroke="#f4f6ee" stroke-opacity="0.27" stroke-width="1.4" stroke-linecap="round"/>
<line x1="659.9" y1="488.6" x2="663.1" y2="484.3" stroke="#f4f6ee" stroke-opacity="0.52" stroke-width="0.9" stroke-linecap="round"/>
<line x1="761.5" y1="390.5" x2="763.9" y2="387.0" stroke="#f4f6ee" stroke-opacity="0.52" stroke-width="1.2" stroke-linecap="round"/>
<line x1="562.9" y1="645.5" x2="565.3" y2="644.9" stroke="#f4f6ee" stroke-opacity="0.26" stroke-width="1.4" stroke-linecap="round"/>
<line x1="550.9" y1="480.0" x2="549.6" y2="481.9" stroke="#f4f6ee" stroke-opacity="0.28" stroke-width="1.4" stroke-linecap="round"/>
<line x1="481.1" y1="513.3" x2="484.2" y2="515.0" stroke="#f4f6ee" stroke-opacity="0.18" stroke-width="1.2" stroke-linecap="round"/>
<line x1="489.7" y1="472.5" x2="487.8" y2="475.4" stroke="#f4f6ee" stroke-opacity="0.18" stroke-width="0.9" stroke-linecap="round"/>
<line x1="511.6" y1="480.0" x2="509.9" y2="477.4" stroke="#f4f6ee" stroke-opacity="0.22" stroke-width="1.0" stroke-linecap="round"/>
<line x1="454.6" y1="497.1" x2="453.5" y2="500.9" stroke="#f4f6ee" stroke-opacity="0.30" stroke-width="1.1" stroke-linecap="round"/>
<line x1="491.5" y1="572.5" x2="490.9" y2="570.3" stroke="#f4f6ee" stroke-opacity="0.23" stroke-width="0.8" stroke-linecap="round"/>
<line x1="570.6" y1="617.9" x2="574.0" y2="617.9" stroke="#f4f6ee" stroke-opacity="0.28" stroke-width="1.2" stroke-linecap="round"/>
<line x1="470.3" y1="562.3" x2="470.5" y2="565.1" stroke="#f4f6ee" stroke-opacity="0.33" stroke-width="1.1" stroke-linecap="round"/>
<line x1="665.2" y1="517.8" x2="668.4" y2="514.1" stroke="#f4f6ee" stroke-opacity="0.28" stroke-width="1.1" stroke-linecap="round"/>
<line x1="660.5" y1="457.3" x2="663.9" y2="452.9" stroke="#f4f6ee" stroke-opacity="0.44" stroke-width="1.1" stroke-linecap="round"/>
<line x1="486.4" y1="577.4" x2="489.1" y2="575.1" stroke="#f4f6ee" stroke-opacity="0.25" stroke-width="1.6" stroke-linecap="round"/>
<line x1="429.9" y1="544.4" x2="429.4" y2="546.7" stroke="#f4f6ee" stroke-opacity="0.34" stroke-width="1.2" stroke-linecap="round"/>
<line x1="454.4" y1="553.6" x2="455.1" y2="556.7" stroke="#f4f6ee" stroke-opacity="0.25" stroke-width="1.3" stroke-linecap="round"/>
<line x1="496.9" y1="586.3" x2="496.7" y2="589.0" stroke="#f4f6ee" stroke-opacity="0.17" stroke-width="1.6" stroke-linecap="round"/>
<line x1="553.6" y1="399.8" x2="555.7" y2="398.3" stroke="#f4f6ee" stroke-opacity="0.15" stroke-width="1.1" stroke-linecap="round"/>
<line x1="579.0" y1="590.4" x2="579.3" y2="587.7" stroke="#f4f6ee" stroke-opacity="0.19" stroke-width="1.4" stroke-linecap="round"/>
<line x1="500.4" y1="621.0" x2="499.7" y2="618.3" stroke="#f4f6ee" stroke-opacity="0.18" stroke-width="1.4" stroke-linecap="round"/>
<line x1="598.0" y1="549.9" x2="601.1" y2="546.9" stroke="#f4f6ee" stroke-opacity="0.36" stroke-width="1.3" stroke-linecap="round"/>
<line x1="597.6" y1="470.4" x2="600.9" y2="465.1" stroke="#f4f6ee" stroke-opacity="0.50" stroke-width="1.1" stroke-linecap="round"/>
<line x1="532.7" y1="525.4" x2="534.6" y2="527.6" stroke="#f4f6ee" stroke-opacity="0.28" stroke-width="1.1" stroke-linecap="round"/>
<line x1="661.9" y1="387.5" x2="664.1" y2="385.3" stroke="#f4f6ee" stroke-opacity="0.45" stroke-width="1.0" stroke-linecap="round"/>
<line x1="506.1" y1="613.6" x2="504.6" y2="611.4" stroke="#f4f6ee" stroke-opacity="0.33" stroke-width="1.4" stroke-linecap="round"/>
<line x1="480.5" y1="647.7" x2="479.9" y2="650.8" stroke="#f4f6ee" stroke-opacity="0.28" stroke-width="1.5" stroke-linecap="round"/>
<line x1="492.0" y1="588.8" x2="492.1" y2="591.8" stroke="#f4f6ee" stroke-opacity="0.24" stroke-width="1.5" stroke-linecap="round"/>
<line x1="631.5" y1="461.6" x2="633.8" y2="457.8" stroke="#f4f6ee" stroke-opacity="0.40" stroke-width="0.8" stroke-linecap="round"/>
<line x1="606.6" y1="531.0" x2="611.0" y2="526.5" stroke="#f4f6ee" stroke-opacity="0.25" stroke-width="1.5" stroke-linecap="round"/>
<line x1="597.5" y1="550.1" x2="602.4" y2="545.1" stroke="#f4f6ee" stroke-opacity="0.36" stroke-width="1.1" stroke-linecap="round"/>
<line x1="663.4" y1="571.9" x2="665.5" y2="569.5" stroke="#f4f6ee" stroke-opacity="0.45" stroke-width="1.5" stroke-linecap="round"/>
<line x1="614.1" y1="526.9" x2="618.4" y2="519.7" stroke="#f4f6ee" stroke-opacity="0.47" stroke-width="1.3" stroke-linecap="round"/>
<line x1="547.1" y1="638.9" x2="549.8" y2="638.5" stroke="#f4f6ee" stroke-opacity="0.26" stroke-width="1.4" stroke-linecap="round"/>
<line x1="497.2" y1="512.3" x2="499.9" y2="513.2" stroke="#f4f6ee" stroke-opacity="0.32" stroke-width="1.0" stroke-linecap="round"/>
<line x1="611.5" y1="463.7" x2="615.8" y2="459.5" stroke="#f4f6ee" stroke-opacity="0.45" stroke-width="1.4" stroke-linecap="round"/>
<line x1="544.0" y1="477.2" x2="546.3" y2="478.5" stroke="#f4f6ee" stroke-opacity="0.28" stroke-width="1.4" stroke-linecap="round"/>
<line x1="655.5" y1="569.2" x2="660.1" y2="563.7" stroke="#f4f6ee" stroke-opacity="0.45" stroke-width="1.0" stroke-linecap="round"/>
<line x1="675.1" y1="519.0" x2="679.1" y2="512.5" stroke="#f4f6ee" stroke-opacity="0.30" stroke-width="0.8" stroke-linecap="round"/>
<line x1="670.7" y1="492.6" x2="676.2" y2="486.8" stroke="#f4f6ee" stroke-opacity="0.42" stroke-width="1.0" stroke-linecap="round"/>
<line x1="532.8" y1="508.3" x2="535.2" y2="507.2" stroke="#f4f6ee" stroke-opacity="0.28" stroke-width="1.5" stroke-linecap="round"/>
<line x1="436.3" y1="551.5" x2="434.8" y2="550.1" stroke="#f4f6ee" stroke-opacity="0.31" stroke-width="1.3" stroke-linecap="round"/>
<line x1="666.4" y1="446.0" x2="668.3" y2="442.7" stroke="#f4f6ee" stroke-opacity="0.25" stroke-width="1.3" stroke-linecap="round"/>
<line x1="695.5" y1="455.0" x2="699.6" y2="448.8" stroke="#f4f6ee" stroke-opacity="0.27" stroke-width="1.4" stroke-linecap="round"/>
<line x1="699.6" y1="408.0" x2="704.1" y2="403.0" stroke="#f4f6ee" stroke-opacity="0.39" stroke-width="1.5" stroke-linecap="round"/>
<line x1="514.1" y1="669.4" x2="510.7" y2="669.2" stroke="#f4f6ee" stroke-opacity="0.15" stroke-width="1.3" stroke-linecap="round"/>
<line x1="733.8" y1="406.7" x2="737.0" y2="403.1" stroke="#f4f6ee" stroke-opacity="0.30" stroke-width="1.5" stroke-linecap="round"/>
<line x1="604.7" y1="400.8" x2="608.0" y2="396.8" stroke="#f4f6ee" stroke-opacity="0.38" stroke-width="1.3" stroke-linecap="round"/>
<line x1="471.5" y1="619.8" x2="473.2" y2="622.0" stroke="#f4f6ee" stroke-opacity="0.28" stroke-width="1.1" stroke-linecap="round"/>
<line x1="565.4" y1="616.5" x2="564.6" y2="620.3" stroke="#f4f6ee" stroke-opacity="0.26" stroke-width="1.0" stroke-linecap="round"/>
<line x1="544.5" y1="562.9" x2="542.6" y2="566.4" stroke="#f4f6ee" stroke-opacity="0.27" stroke-width="1.0" stroke-linecap="round"/>
<line x1="561.9" y1="586.4" x2="559.4" y2="588.3" stroke="#f4f6ee" stroke-opacity="0.31" stroke-width="1.0" stroke-linecap="round"/>
<line x1="579.8" y1="557.2" x2="577.0" y2="559.6" stroke="#f4f6ee" stroke-opacity="0.16" stroke-width="1.5" stroke-linecap="round"/>
<line x1="638.0" y1="464.3" x2="643.6" y2="458.5" stroke="#f4f6ee" stroke-opacity="0.46" stroke-width="1.5" stroke-linecap="round"/>
<line x1="550.3" y1="408.3" x2="549.4" y2="411.2" stroke="#f4f6ee" stroke-opacity="0.19" stroke-width="1.4" stroke-linecap="round"/>
<line x1="651.7" y1="584.3" x2="654.9" y2="579.4" stroke="#f4f6ee" stroke-opacity="0.33" stroke-width="1.4" stroke-linecap="round"/>
<line x1="716.1" y1="452.2" x2="720.7" y2="447.6" stroke="#f4f6ee" stroke-opacity="0.52" stroke-width="1.2" stroke-linecap="round"/>
<line x1="600.9" y1="558.0" x2="603.1" y2="554.6" stroke="#f4f6ee" stroke-opacity="0.30" stroke-width="1.4" stroke-linecap="round"/>
<line x1="556.5" y1="550.6" x2="559.3" y2="550.9" stroke="#f4f6ee" stroke-opacity="0.18" stroke-width="0.8" stroke-linecap="round"/>
<line x1="456.4" y1="570.9" x2="454.4" y2="568.0" stroke="#f4f6ee" stroke-opacity="0.27" stroke-width="1.1" stroke-linecap="round"/>
<line x1="617.6" y1="389.1" x2="619.9" y2="386.9" stroke="#f4f6ee" stroke-opacity="0.51" stroke-width="1.2" stroke-linecap="round"/>
<line x1="636.2" y1="460.7" x2="640.8" y2="454.6" stroke="#f4f6ee" stroke-opacity="0.53" stroke-width="1.4" stroke-linecap="round"/>
<line x1="493.4" y1="436.7" x2="491.3" y2="436.0" stroke="#f4f6ee" stroke-opacity="0.26" stroke-width="1.5" stroke-linecap="round"/>
<line x1="769.9" y1="402.1" x2="773.8" y2="396.8" stroke="#f4f6ee" stroke-opacity="0.29" stroke-width="1.6" stroke-linecap="round"/>
<line x1="515.3" y1="550.6" x2="512.1" y2="551.5" stroke="#f4f6ee" stroke-opacity="0.28" stroke-width="1.1" stroke-linecap="round"/>
<line x1="514.8" y1="487.5" x2="511.6" y2="489.7" stroke="#f4f6ee" stroke-opacity="0.32" stroke-width="0.8" stroke-linecap="round"/>
<line x1="679.0" y1="471.7" x2="683.4" y2="466.9" stroke="#f4f6ee" stroke-opacity="0.28" stroke-width="1.1" stroke-linecap="round"/>
<line x1="515.2" y1="419.9" x2="513.8" y2="417.3" stroke="#f4f6ee" stroke-opacity="0.20" stroke-width="0.9" stroke-linecap="round"/>
<line x1="679.3" y1="386.7" x2="683.3" y2="380.6" stroke="#f4f6ee" stroke-opacity="0.26" stroke-width="1.5" stroke-linecap="round"/>
<line x1="501.0" y1="660.4" x2="498.2" y2="662.8" stroke="#f4f6ee" stroke-opacity="0.18" stroke-width="1.2" stroke-linecap="round"/>
<line x1="591.4" y1="483.9" x2="596.3" y2="477.7" stroke="#f4f6ee" stroke-opacity="0.44" stroke-width="0.9" stroke-linecap="round"/>
<line x1="518.9" y1="505.3" x2="519.2" y2="503.0" stroke="#f4f6ee" stroke-opacity="0.32" stroke-width="1.1" stroke-linecap="round"/>
<line x1="480.4" y1="528.8" x2="478.3" y2="530.3" stroke="#f4f6ee" stroke-opacity="0.17" stroke-width="1.6" stroke-linecap="round"/>
<line x1="675.6" y1="445.7" x2="679.0" y2="440.9" stroke="#f4f6ee" stroke-opacity="0.33" stroke-width="1.0" stroke-linecap="round"/>
<line x1="453.1" y1="469.0" x2="449.5" y2="467.6" stroke="#f4f6ee" stroke-opacity="0.30" stroke-width="1.0" stroke-linecap="round"/>
<line x1="487.5" y1="512.3" x2="486.7" y2="508.5" stroke="#f4f6ee" stroke-opacity="0.26" stroke-width="0.9" stroke-linecap="round"/>
<line x1="485.3" y1="611.8" x2="484.1" y2="608.6" stroke="#f4f6ee" stroke-opacity="0.17" stroke-width="0.9" stroke-linecap="round"/>
<line x1="652.3" y1="530.2" x2="654.9" y2="526.3" stroke="#f4f6ee" stroke-opacity="0.43" stroke-width="1.4" stroke-linecap="round"/>
<line x1="700.8" y1="504.2" x2="704.5" y2="497.9" stroke="#f4f6ee" stroke-opacity="0.49" stroke-width="1.1" stroke-linecap="round"/>
<line x1="607.3" y1="387.6" x2="612.5" y2="380.9" stroke="#f4f6ee" stroke-opacity="0.51" stroke-width="1.0" stroke-linecap="round"/>
<line x1="487.6" y1="630.0" x2="486.1" y2="627.7" stroke="#f4f6ee" stroke-opacity="0.22" stroke-width="1.3" stroke-linecap="round"/>
<line x1="416.8" y1="537.4" x2="419.7" y2="537.7" stroke="#f4f6ee" stroke-opacity="0.17" stroke-width="1.4" stroke-linecap="round"/>
<line x1="540.2" y1="594.2" x2="540.2" y2="597.0" stroke="#f4f6ee" stroke-opacity="0.16" stroke-width="1.5" stroke-linecap="round"/>
<line x1="615.2" y1="540.6" x2="618.3" y2="535.2" stroke="#f4f6ee" stroke-opacity="0.54" stroke-width="1.0" stroke-linecap="round"/>
<line x1="512.7" y1="625.7" x2="511.0" y2="624.5" stroke="#f4f6ee" stroke-opacity="0.29" stroke-width="1.0" stroke-linecap="round"/>
<line x1="639.8" y1="538.3" x2="643.6" y2="532.2" stroke="#f4f6ee" stroke-opacity="0.51" stroke-width="1.4" stroke-linecap="round"/>
<line x1="607.5" y1="531.7" x2="610.0" y2="527.8" stroke="#f4f6ee" stroke-opacity="0.37" stroke-width="0.9" stroke-linecap="round"/>
<line x1="472.4" y1="553.1" x2="470.6" y2="550.1" stroke="#f4f6ee" stroke-opacity="0.32" stroke-width="1.6" stroke-linecap="round"/>
<line x1="566.6" y1="507.9" x2="570.2" y2="508.5" stroke="#f4f6ee" stroke-opacity="0.23" stroke-width="1.6" stroke-linecap="round"/>
<line x1="508.7" y1="482.5" x2="505.9" y2="482.9" stroke="#f4f6ee" stroke-opacity="0.31" stroke-width="1.5" stroke-linecap="round"/>
<line x1="435.9" y1="536.7" x2="432.3" y2="538.2" stroke="#f4f6ee" stroke-opacity="0.20" stroke-width="1.1" stroke-linecap="round"/>
<line x1="661.7" y1="491.2" x2="664.9" y2="485.9" stroke="#f4f6ee" stroke-opacity="0.38" stroke-width="1.2" stroke-linecap="round"/>
<line x1="760.0" y1="393.2" x2="763.9" y2="387.6" stroke="#f4f6ee" stroke-opacity="0.45" stroke-width="1.0" stroke-linecap="round"/>
<line x1="657.3" y1="457.4" x2="661.0" y2="452.6" stroke="#f4f6ee" stroke-opacity="0.54" stroke-width="1.0" stroke-linecap="round"/>
<line x1="534.1" y1="575.3" x2="536.0" y2="576.6" stroke="#f4f6ee" stroke-opacity="0.34" stroke-width="1.2" stroke-linecap="round"/>
<line x1="519.7" y1="521.5" x2="517.9" y2="519.1" stroke="#f4f6ee" stroke-opacity="0.17" stroke-width="0.9" stroke-linecap="round"/>
<line x1="529.5" y1="503.7" x2="529.4" y2="501.2" stroke="#f4f6ee" stroke-opacity="0.17" stroke-width="1.2" stroke-linecap="round"/>
<line x1="637.4" y1="576.2" x2="640.2" y2="573.0" stroke="#f4f6ee" stroke-opacity="0.39" stroke-width="1.2" stroke-linecap="round"/>
<line x1="654.0" y1="522.3" x2="656.7" y2="518.3" stroke="#f4f6ee" stroke-opacity="0.32" stroke-width="1.2" stroke-linecap="round"/>
<line x1="564.4" y1="556.9" x2="565.7" y2="555.3" stroke="#f4f6ee" stroke-opacity="0.32" stroke-width="1.0" stroke-linecap="round"/>
<line x1="632.1" y1="528.9" x2="635.5" y2="525.7" stroke="#f4f6ee" stroke-opacity="0.34" stroke-width="1.4" stroke-linecap="round"/>
<line x1="586.6" y1="601.4" x2="586.2" y2="599.2" stroke="#f4f6ee" stroke-opacity="0.34" stroke-width="1.4" stroke-linecap="round"/>
<line x1="475.3" y1="483.1" x2="476.5" y2="485.5" stroke="#f4f6ee" stroke-opacity="0.27" stroke-width="1.5" stroke-linecap="round"/>
<line x1="771.7" y1="420.8" x2="775.8" y2="413.7" stroke="#f4f6ee" stroke-opacity="0.48" stroke-width="1.3" stroke-linecap="round"/>
<line x1="638.1" y1="507.1" x2="643.5" y2="501.7" stroke="#f4f6ee" stroke-opacity="0.43" stroke-width="1.1" stroke-linecap="round"/>
<line x1="591.4" y1="519.0" x2="595.6" y2="513.0" stroke="#f4f6ee" stroke-opacity="0.37" stroke-width="1.2" stroke-linecap="round"/>
<line x1="609.8" y1="514.9" x2="612.2" y2="511.5" stroke="#f4f6ee" stroke-opacity="0.29" stroke-width="1.3" stroke-linecap="round"/>
<line x1="641.8" y1="409.1" x2="646.8" y2="402.2" stroke="#f4f6ee" stroke-opacity="0.50" stroke-width="1.5" stroke-linecap="round"/>
<line x1="635.3" y1="530.7" x2="641.2" y2="524.5" stroke="#f4f6ee" stroke-opacity="0.41" stroke-width="1.6" stroke-linecap="round"/>
<line x1="616.8" y1="536.6" x2="621.0" y2="530.9" stroke="#f4f6ee" stroke-opacity="0.36" stroke-width="1.3" stroke-linecap="round"/>
<line x1="678.8" y1="539.0" x2="681.0" y2="536.1" stroke="#f4f6ee" stroke-opacity="0.37" stroke-width="1.2" stroke-linecap="round"/>
<line x1="586.7" y1="568.5" x2="588.9" y2="565.2" stroke="#f4f6ee" stroke-opacity="0.26" stroke-width="1.5" stroke-linecap="round"/>
<line x1="481.6" y1="477.5" x2="479.8" y2="481.0" stroke="#f4f6ee" stroke-opacity="0.25" stroke-width="0.9" stroke-linecap="round"/>
<line x1="476.0" y1="469.1" x2="479.0" y2="469.2" stroke="#f4f6ee" stroke-opacity="0.19" stroke-width="0.9" stroke-linecap="round"/>
<line x1="660.7" y1="562.1" x2="664.5" y2="558.6" stroke="#f4f6ee" stroke-opacity="0.44" stroke-width="0.8" stroke-linecap="round"/>
<line x1="575.5" y1="616.9" x2="576.4" y2="619.4" stroke="#f4f6ee" stroke-opacity="0.15" stroke-width="1.0" stroke-linecap="round"/>
<line x1="675.6" y1="441.4" x2="679.4" y2="436.8" stroke="#f4f6ee" stroke-opacity="0.33" stroke-width="1.3" stroke-linecap="round"/>
<line x1="639.0" y1="505.1" x2="641.0" y2="502.0" stroke="#f4f6ee" stroke-opacity="0.48" stroke-width="0.9" stroke-linecap="round"/>
<line x1="618.8" y1="627.5" x2="617.7" y2="630.5" stroke="#f4f6ee" stroke-opacity="0.16" stroke-width="0.8" stroke-linecap="round"/>
<line x1="715.5" y1="478.9" x2="719.8" y2="473.0" stroke="#f4f6ee" stroke-opacity="0.30" stroke-width="1.0" stroke-linecap="round"/>
<line x1="642.1" y1="486.6" x2="645.5" y2="482.0" stroke="#f4f6ee" stroke-opacity="0.27" stroke-width="1.5" stroke-linecap="round"/>
<line x1="586.5" y1="567.2" x2="584.1" y2="566.5" stroke="#f4f6ee" stroke-opacity="0.34" stroke-width="1.5" stroke-linecap="round"/>
<line x1="537.8" y1="650.0" x2="539.0" y2="646.5" stroke="#f4f6ee" stroke-opacity="0.27" stroke-width="1.6" stroke-linecap="round"/>
<line x1="509.7" y1="498.8" x2="509.1" y2="495.4" stroke="#f4f6ee" stroke-opacity="0.21" stroke-width="1.5" stroke-linecap="round"/>
<line x1="603.9" y1="618.4" x2="602.8" y2="616.2" stroke="#f4f6ee" stroke-opacity="0.22" stroke-width="0.9" stroke-linecap="round"/>
<line x1="634.0" y1="417.1" x2="637.7" y2="412.1" stroke="#f4f6ee" stroke-opacity="0.37" stroke-width="0.9" stroke-linecap="round"/>
<line x1="489.6" y1="467.2" x2="487.2" y2="466.7" stroke="#f4f6ee" stroke-opacity="0.28" stroke-width="1.1" stroke-linecap="round"/>
<line x1="475.8" y1="592.6" x2="476.1" y2="590.5" stroke="#f4f6ee" stroke-opacity="0.32" stroke-width="0.9" stroke-linecap="round"/>
<line x1="587.9" y1="631.4" x2="585.9" y2="628.3" stroke="#f4f6ee" stroke-opacity="0.22" stroke-width="1.4" stroke-linecap="round"/>
<line x1="496.1" y1="665.4" x2="495.7" y2="662.4" stroke="#f4f6ee" stroke-opacity="0.24" stroke-width="0.9" stroke-linecap="round"/>
<line x1="690.5" y1="460.4" x2="695.9" y2="454.0" stroke="#f4f6ee" stroke-opacity="0.36" stroke-width="1.0" stroke-linecap="round"/>
<line x1="652.2" y1="446.1" x2="656.6" y2="439.1" stroke="#f4f6ee" stroke-opacity="0.40" stroke-width="1.2" stroke-linecap="round"/>
<line x1="520.5" y1="612.2" x2="522.0" y2="614.5" stroke="#f4f6ee" stroke-opacity="0.26" stroke-width="1.0" stroke-linecap="round"/>
<line x1="567.1" y1="408.6" x2="565.7" y2="410.5" stroke="#f4f6ee" stroke-opacity="0.21" stroke-width="1.3" stroke-linecap="round"/>
<line x1="457.5" y1="549.9" x2="460.2" y2="549.9" stroke="#f4f6ee" stroke-opacity="0.21" stroke-width="0.9" stroke-linecap="round"/>
<line x1="464.2" y1="595.9" x2="466.3" y2="594.4" stroke="#f4f6ee" stroke-opacity="0.33" stroke-width="1.4" stroke-linecap="round"/>
<line x1="466.5" y1="465.1" x2="467.4" y2="467.0" stroke="#f4f6ee" stroke-opacity="0.28" stroke-width="1.1" stroke-linecap="round"/>
<line x1="575.9" y1="578.7" x2="575.9" y2="575.3" stroke="#f4f6ee" stroke-opacity="0.32" stroke-width="1.1" stroke-linecap="round"/>
<line x1="660.2" y1="437.0" x2="662.9" y2="434.4" stroke="#f4f6ee" stroke-opacity="0.47" stroke-width="1.4" stroke-linecap="round"/>
<line x1="533.2" y1="496.1" x2="534.0" y2="494.2" stroke="#f4f6ee" stroke-opacity="0.28" stroke-width="0.9" stroke-linecap="round"/>
<line x1="694.5" y1="458.6" x2="698.2" y2="454.5" stroke="#f4f6ee" stroke-opacity="0.35" stroke-width="0.8" stroke-linecap="round"/>
<line x1="526.7" y1="395.8" x2="529.6" y2="398.1" stroke="#f4f6ee" stroke-opacity="0.16" stroke-width="1.0" stroke-linecap="round"/>
<line x1="497.0" y1="654.6" x2="494.0" y2="652.8" stroke="#f4f6ee" stroke-opacity="0.29" stroke-width="1.1" stroke-linecap="round"/>
<line x1="524.7" y1="409.7" x2="528.1" y2="407.9" stroke="#f4f6ee" stroke-opacity="0.34" stroke-width="1.4" stroke-linecap="round"/>
<line x1="660.0" y1="517.5" x2="662.2" y2="515.0" stroke="#f4f6ee" stroke-opacity="0.38" stroke-width="1.2" stroke-linecap="round"/>
<line x1="712.1" y1="396.0" x2="717.1" y2="390.8" stroke="#f4f6ee" stroke-opacity="0.33" stroke-width="1.2" stroke-linecap="round"/>
<line x1="627.1" y1="457.2" x2="629.1" y2="454.4" stroke="#f4f6ee" stroke-opacity="0.37" stroke-width="1.0" stroke-linecap="round"/>
<line x1="507.8" y1="454.8" x2="510.6" y2="453.8" stroke="#f4f6ee" stroke-opacity="0.34" stroke-width="1.1" stroke-linecap="round"/>
<line x1="531.8" y1="645.8" x2="533.9" y2="646.6" stroke="#f4f6ee" stroke-opacity="0.22" stroke-width="1.5" stroke-linecap="round"/>
<line x1="628.8" y1="608.9" x2="630.0" y2="610.9" stroke="#f4f6ee" stroke-opacity="0.27" stroke-width="1.2" stroke-linecap="round"/>
<line x1="459.6" y1="468.9" x2="458.9" y2="466.3" stroke="#f4f6ee" stroke-opacity="0.16" stroke-width="1.0" stroke-linecap="round"/>
<line x1="491.9" y1="591.4" x2="489.7" y2="589.5" stroke="#f4f6ee" stroke-opacity="0.21" stroke-width="1.2" stroke-linecap="round"/>
<line x1="457.4" y1="528.2" x2="456.4" y2="525.5" stroke="#f4f6ee" stroke-opacity="0.26" stroke-width="0.8" stroke-linecap="round"/>
<line x1="669.5" y1="457.7" x2="671.9" y2="453.9" stroke="#f4f6ee" stroke-opacity="0.26" stroke-width="1.4" stroke-linecap="round"/>
<line x1="487.4" y1="572.5" x2="484.1" y2="574.2" stroke="#f4f6ee" stroke-opacity="0.18" stroke-width="1.4" stroke-linecap="round"/>
<line x1="558.7" y1="546.7" x2="557.4" y2="549.1" stroke="#f4f6ee" stroke-opacity="0.20" stroke-width="0.8" stroke-linecap="round"/>
<line x1="636.1" y1="569.6" x2="641.4" y2="563.7" stroke="#f4f6ee" stroke-opacity="0.52" stroke-width="1.6" stroke-linecap="round"/>
<line x1="607.8" y1="531.4" x2="610.1" y2="528.1" stroke="#f4f6ee" stroke-opacity="0.42" stroke-width="0.9" stroke-linecap="round"/>
<line x1="683.3" y1="431.6" x2="687.4" y2="427.7" stroke="#f4f6ee" stroke-opacity="0.28" stroke-width="0.8" stroke-linecap="round"/>
<line x1="697.0" y1="383.8" x2="702.6" y2="378.1" stroke="#f4f6ee" stroke-opacity="0.49" stroke-width="1.1" stroke-linecap="round"/>
<line x1="525.5" y1="579.5" x2="528.1" y2="578.1" stroke="#f4f6ee" stroke-opacity="0.22" stroke-width="1.2" stroke-linecap="round"/>
<line x1="530.3" y1="514.6" x2="532.1" y2="512.1" stroke="#f4f6ee" stroke-opacity="0.19" stroke-width="0.9" stroke-linecap="round"/>
<line x1="541.2" y1="519.8" x2="537.9" y2="521.9" stroke="#f4f6ee" stroke-opacity="0.32" stroke-width="1.6" stroke-linecap="round"/>
<line x1="731.3" y1="400.8" x2="735.9" y2="395.4" stroke="#f4f6ee" stroke-opacity="0.34" stroke-width="1.3" stroke-linecap="round"/>
<line x1="667.5" y1="471.9" x2="671.1" y2="468.3" stroke="#f4f6ee" stroke-opacity="0.26" stroke-width="1.0" stroke-linecap="round"/>
<line x1="679.7" y1="515.9" x2="682.0" y2="513.2" stroke="#f4f6ee" stroke-opacity="0.36" stroke-width="1.3" stroke-linecap="round"/>
<line x1="577.4" y1="540.4" x2="579.9" y2="538.5" stroke="#f4f6ee" stroke-opacity="0.17" stroke-width="0.9" stroke-linecap="round"/>
<line x1="513.9" y1="411.2" x2="513.9" y2="408.1" stroke="#f4f6ee" stroke-opacity="0.25" stroke-width="1.2" stroke-linecap="round"/>
<line x1="503.4" y1="553.1" x2="505.6" y2="553.3" stroke="#f4f6ee" stroke-opacity="0.27" stroke-width="0.9" stroke-linecap="round"/>
<line x1="574.1" y1="404.8" x2="572.2" y2="407.0" stroke="#f4f6ee" stroke-opacity="0.26" stroke-width="1.4" stroke-linecap="round"/>
<line x1="710.2" y1="417.0" x2="716.2" y2="410.4" stroke="#f4f6ee" stroke-opacity="0.28" stroke-width="1.5" stroke-linecap="round"/>
<line x1="717.2" y1="423.6" x2="721.2" y2="417.1" stroke="#f4f6ee" stroke-opacity="0.32" stroke-width="1.1" stroke-linecap="round"/>
<line x1="498.1" y1="472.1" x2="501.2" y2="470.5" stroke="#f4f6ee" stroke-opacity="0.33" stroke-width="1.3" stroke-linecap="round"/>
<line x1="480.5" y1="604.4" x2="480.3" y2="607.1" stroke="#f4f6ee" stroke-opacity="0.29" stroke-width="1.5" stroke-linecap="round"/>
<line x1="462.9" y1="493.8" x2="459.6" y2="494.9" stroke="#f4f6ee" stroke-opacity="0.29" stroke-width="0.8" stroke-linecap="round"/>
<line x1="650.5" y1="412.6" x2="654.8" y2="408.0" stroke="#f4f6ee" stroke-opacity="0.28" stroke-width="1.5" stroke-linecap="round"/>
<line x1="678.3" y1="458.6" x2="680.9" y2="455.3" stroke="#f4f6ee" stroke-opacity="0.50" stroke-width="1.3" stroke-linecap="round"/>
<line x1="487.3" y1="547.6" x2="488.2" y2="550.0" stroke="#f4f6ee" stroke-opacity="0.23" stroke-width="0.9" stroke-linecap="round"/>
<line x1="727.2" y1="393.5" x2="730.0" y2="390.6" stroke="#f4f6ee" stroke-opacity="0.45" stroke-width="1.1" stroke-linecap="round"/>
<line x1="499.4" y1="648.5" x2="496.3" y2="647.6" stroke="#f4f6ee" stroke-opacity="0.18" stroke-width="1.1" stroke-linecap="round"/>
<line x1="597.4" y1="554.4" x2="600.6" y2="550.1" stroke="#f4f6ee" stroke-opacity="0.25" stroke-width="1.3" stroke-linecap="round"/>
<line x1="545.2" y1="389.1" x2="542.3" y2="389.3" stroke="#f4f6ee" stroke-opacity="0.16" stroke-width="0.9" stroke-linecap="round"/>
<line x1="676.7" y1="464.0" x2="679.6" y2="460.3" stroke="#f4f6ee" stroke-opacity="0.33" stroke-width="1.3" stroke-linecap="round"/>
<line x1="661.9" y1="571.5" x2="664.9" y2="567.2" stroke="#f4f6ee" stroke-opacity="0.49" stroke-width="1.5" stroke-linecap="round"/>
<line x1="533.6" y1="609.7" x2="537.0" y2="609.9" stroke="#f4f6ee" stroke-opacity="0.28" stroke-width="1.1" stroke-linecap="round"/>
<line x1="629.8" y1="503.6" x2="631.7" y2="500.8" stroke="#f4f6ee" stroke-opacity="0.35" stroke-width="1.6" stroke-linecap="round"/>
<line x1="602.8" y1="492.1" x2="605.3" y2="488.4" stroke="#f4f6ee" stroke-opacity="0.35" stroke-width="0.9" stroke-linecap="round"/>
<line x1="591.7" y1="515.3" x2="595.4" y2="510.1" stroke="#f4f6ee" stroke-opacity="0.30" stroke-width="0.9" stroke-linecap="round"/>
<line x1="554.2" y1="613.0" x2="552.3" y2="615.1" stroke="#f4f6ee" stroke-opacity="0.16" stroke-width="1.2" stroke-linecap="round"/>
<line x1="515.4" y1="389.9" x2="515.7" y2="387.5" stroke="#f4f6ee" stroke-opacity="0.29" stroke-width="1.0" stroke-linecap="round"/>
<line x1="667.8" y1="441.4" x2="673.1" y2="436.3" stroke="#f4f6ee" stroke-opacity="0.43" stroke-width="0.9" stroke-linecap="round"/>
<line x1="488.4" y1="542.5" x2="490.8" y2="545.4" stroke="#f4f6ee" stroke-opacity="0.33" stroke-width="1.0" stroke-linecap="round"/>
<line x1="542.4" y1="605.5" x2="545.2" y2="603.7" stroke="#f4f6ee" stroke-opacity="0.29" stroke-width="1.1" stroke-linecap="round"/>
<line x1="432.7" y1="569.0" x2="435.4" y2="568.9" stroke="#f4f6ee" stroke-opacity="0.27" stroke-width="1.0" stroke-linecap="round"/>
<line x1="595.7" y1="387.0" x2="601.2" y2="380.4" stroke="#f4f6ee" stroke-opacity="0.55" stroke-width="0.8" stroke-linecap="round"/>
<line x1="543.4" y1="410.8" x2="541.9" y2="408.9" stroke="#f4f6ee" stroke-opacity="0.30" stroke-width="0.9" stroke-linecap="round"/>
<line x1="625.1" y1="557.8" x2="629.2" y2="553.0" stroke="#f4f6ee" stroke-opacity="0.43" stroke-width="1.1" stroke-linecap="round"/>
<line x1="704.0" y1="459.6" x2="709.0" y2="454.3" stroke="#f4f6ee" stroke-opacity="0.48" stroke-width="1.0" stroke-linecap="round"/>
<line x1="600.5" y1="577.6" x2="605.0" y2="571.5" stroke="#f4f6ee" stroke-opacity="0.55" stroke-width="1.0" stroke-linecap="round"/>
<line x1="710.1" y1="409.7" x2="711.8" y2="407.0" stroke="#f4f6ee" stroke-opacity="0.27" stroke-width="1.2" stroke-linecap="round"/>
<line x1="631.5" y1="437.0" x2="636.6" y2="430.0" stroke="#f4f6ee" stroke-opacity="0.29" stroke-width="0.9" stroke-linecap="round"/>
<line x1="718.5" y1="455.0" x2="724.0" y2="448.1" stroke="#f4f6ee" stroke-opacity="0.44" stroke-width="1.1" stroke-linecap="round"/>
<line x1="541.3" y1="651.3" x2="541.5" y2="653.5" stroke="#f4f6ee" stroke-opacity="0.16" stroke-width="1.3" stroke-linecap="round"/>
<line x1="571.7" y1="639.6" x2="573.7" y2="640.5" stroke="#f4f6ee" stroke-opacity="0.23" stroke-width="1.5" stroke-linecap="round"/>
<line x1="502.4" y1="457.8" x2="504.7" y2="456.8" stroke="#f4f6ee" stroke-opacity="0.20" stroke-width="1.0" stroke-linecap="round"/>
<line x1="499.5" y1="552.1" x2="498.0" y2="553.9" stroke="#f4f6ee" stroke-opacity="0.32" stroke-width="1.0" stroke-linecap="round"/>
<line x1="525.2" y1="481.5" x2="522.9" y2="483.3" stroke="#f4f6ee" stroke-opacity="0.18" stroke-width="1.3" stroke-linecap="round"/>
<line x1="648.1" y1="517.6" x2="652.6" y2="513.0" stroke="#f4f6ee" stroke-opacity="0.31" stroke-width="1.5" stroke-linecap="round"/>
<line x1="555.5" y1="614.6" x2="554.0" y2="611.2" stroke="#f4f6ee" stroke-opacity="0.32" stroke-width="1.6" stroke-linecap="round"/>
<line x1="531.1" y1="390.3" x2="528.9" y2="390.6" stroke="#f4f6ee" stroke-opacity="0.15" stroke-width="1.5" stroke-linecap="round"/>
<line x1="473.8" y1="601.6" x2="472.7" y2="599.7" stroke="#f4f6ee" stroke-opacity="0.29" stroke-width="0.9" stroke-linecap="round"/>
<line x1="506.5" y1="618.3" x2="503.2" y2="617.5" stroke="#f4f6ee" stroke-opacity="0.25" stroke-width="1.0" stroke-linecap="round"/>
<line x1="538.4" y1="643.9" x2="540.7" y2="643.8" stroke="#f4f6ee" stroke-opacity="0.18" stroke-width="1.1" stroke-linecap="round"/>
<line x1="484.8" y1="586.6" x2="485.0" y2="588.9" stroke="#f4f6ee" stroke-opacity="0.25" stroke-width="0.9" stroke-linecap="round"/>
<line x1="552.9" y1="530.4" x2="555.1" y2="527.3" stroke="#f4f6ee" stroke-opacity="0.19" stroke-width="1.6" stroke-linecap="round"/>
<line x1="521.5" y1="435.6" x2="519.2" y2="434.6" stroke="#f4f6ee" stroke-opacity="0.16" stroke-width="1.2" stroke-linecap="round"/>
<line x1="574.2" y1="548.3" x2="571.4" y2="548.1" stroke="#f4f6ee" stroke-opacity="0.29" stroke-width="1.3" stroke-linecap="round"/>
<line x1="627.1" y1="546.0" x2="632.3" y2="541.1" stroke="#f4f6ee" stroke-opacity="0.51" stroke-width="1.4" stroke-linecap="round"/>
<line x1="566.0" y1="497.5" x2="564.2" y2="495.3" stroke="#f4f6ee" stroke-opacity="0.35" stroke-width="0.8" stroke-linecap="round"/>
<line x1="514.3" y1="564.4" x2="514.2" y2="561.7" stroke="#f4f6ee" stroke-opacity="0.19" stroke-width="0.9" stroke-linecap="round"/>
<line x1="769.3" y1="397.7" x2="773.5" y2="391.9" stroke="#f4f6ee" stroke-opacity="0.44" stroke-width="1.2" stroke-linecap="round"/>
<line x1="506.4" y1="570.0" x2="509.0" y2="567.6" stroke="#f4f6ee" stroke-opacity="0.29" stroke-width="1.1" stroke-linecap="round"/>
<line x1="620.2" y1="565.0" x2="624.3" y2="559.2" stroke="#f4f6ee" stroke-opacity="0.44" stroke-width="1.2" stroke-linecap="round"/>
<line x1="502.1" y1="564.9" x2="499.9" y2="566.3" stroke="#f4f6ee" stroke-opacity="0.24" stroke-width="1.4" stroke-linecap="round"/>
<line x1="618.6" y1="524.6" x2="620.9" y2="520.9" stroke="#f4f6ee" stroke-opacity="0.53" stroke-width="1.2" stroke-linecap="round"/>
<line x1="619.3" y1="539.7" x2="623.7" y2="533.1" stroke="#f4f6ee" stroke-opacity="0.30" stroke-width="1.5" stroke-linecap="round"/>
<line x1="594.5" y1="573.2" x2="600.2" y2="567.6" stroke="#f4f6ee" stroke-opacity="0.51" stroke-width="0.8" stroke-linecap="round"/>
<line x1="563.7" y1="630.1" x2="561.1" y2="627.6" stroke="#f4f6ee" stroke-opacity="0.18" stroke-width="1.0" stroke-linecap="round"/>
<line x1="455.1" y1="488.9" x2="458.7" y2="489.4" stroke="#f4f6ee" stroke-opacity="0.24" stroke-width="0.9" stroke-linecap="round"/>
<line x1="686.1" y1="516.4" x2="690.1" y2="512.2" stroke="#f4f6ee" stroke-opacity="0.48" stroke-width="0.9" stroke-linecap="round"/>
<line x1="680.3" y1="492.0" x2="683.7" y2="486.9" stroke="#f4f6ee" stroke-opacity="0.36" stroke-width="1.1" stroke-linecap="round"/>
<line x1="563.6" y1="388.3" x2="565.8" y2="389.3" stroke="#f4f6ee" stroke-opacity="0.16" stroke-width="0.9" stroke-linecap="round"/>
<line x1="695.1" y1="464.6" x2="697.9" y2="460.5" stroke="#f4f6ee" stroke-opacity="0.50" stroke-width="0.9" stroke-linecap="round"/>
<line x1="493.7" y1="508.7" x2="496.3" y2="511.1" stroke="#f4f6ee" stroke-opacity="0.22" stroke-width="0.8" stroke-linecap="round"/>
<line x1="587.6" y1="492.1" x2="588.5" y2="488.8" stroke="#f4f6ee" stroke-opacity="0.23" stroke-width="1.3" stroke-linecap="round"/>
<line x1="565.3" y1="554.9" x2="563.9" y2="551.3" stroke="#f4f6ee" stroke-opacity="0.34" stroke-width="1.4" stroke-linecap="round"/>
<line x1="560.2" y1="580.7" x2="557.8" y2="579.5" stroke="#f4f6ee" stroke-opacity="0.30" stroke-width="1.1" stroke-linecap="round"/>
<line x1="620.1" y1="530.5" x2="625.8" y2="524.3" stroke="#f4f6ee" stroke-opacity="0.26" stroke-width="1.3" stroke-linecap="round"/>
<line x1="595.4" y1="520.3" x2="600.2" y2="513.8" stroke="#f4f6ee" stroke-opacity="0.39" stroke-width="1.5" stroke-linecap="round"/>
<line x1="586.5" y1="528.9" x2="585.2" y2="531.6" stroke="#f4f6ee" stroke-opacity="0.28" stroke-width="1.4" stroke-linecap="round"/>
<line x1="571.7" y1="395.1" x2="574.8" y2="396.2" stroke="#f4f6ee" stroke-opacity="0.30" stroke-width="1.4" stroke-linecap="round"/>
<line x1="461.1" y1="448.6" x2="460.2" y2="450.5" stroke="#f4f6ee" stroke-opacity="0.17" stroke-width="0.9" stroke-linecap="round"/>
<line x1="436.5" y1="585.3" x2="439.9" y2="584.9" stroke="#f4f6ee" stroke-opacity="0.16" stroke-width="1.4" stroke-linecap="round"/>
<line x1="578.0" y1="556.4" x2="576.4" y2="560.1" stroke="#f4f6ee" stroke-opacity="0.32" stroke-width="0.9" stroke-linecap="round"/>
<line x1="545.4" y1="536.9" x2="543.4" y2="537.1" stroke="#f4f6ee" stroke-opacity="0.20" stroke-width="1.0" stroke-linecap="round"/>
<line x1="614.3" y1="507.8" x2="616.2" y2="505.1" stroke="#f4f6ee" stroke-opacity="0.51" stroke-width="1.4" stroke-linecap="round"/>
<line x1="624.4" y1="494.0" x2="628.0" y2="489.5" stroke="#f4f6ee" stroke-opacity="0.43" stroke-width="1.1" stroke-linecap="round"/>
<line x1="727.6" y1="442.5" x2="733.0" y2="435.9" stroke="#f4f6ee" stroke-opacity="0.27" stroke-width="1.1" stroke-linecap="round"/>
<line x1="622.9" y1="504.5" x2="626.6" y2="499.2" stroke="#f4f6ee" stroke-opacity="0.33" stroke-width="1.4" stroke-linecap="round"/>
<line x1="528.7" y1="594.0" x2="531.7" y2="596.0" stroke="#f4f6ee" stroke-opacity="0.24" stroke-width="1.5" stroke-linecap="round"/>
<line x1="437.5" y1="511.8" x2="434.4" y2="510.8" stroke="#f4f6ee" stroke-opacity="0.32" stroke-width="0.9" stroke-linecap="round"/>
<line x1="647.6" y1="436.5" x2="653.0" y2="429.9" stroke="#f4f6ee" stroke-opacity="0.49" stroke-width="1.2" stroke-linecap="round"/>
<line x1="741.9" y1="426.3" x2="746.6" y2="419.2" stroke="#f4f6ee" stroke-opacity="0.28" stroke-width="0.9" stroke-linecap="round"/>
<line x1="576.7" y1="578.7" x2="574.6" y2="580.1" stroke="#f4f6ee" stroke-opacity="0.29" stroke-width="0.9" stroke-linecap="round"/>
<line x1="437.1" y1="589.6" x2="436.0" y2="591.4" stroke="#f4f6ee" stroke-opacity="0.21" stroke-width="1.0" stroke-linecap="round"/>
<line x1="642.0" y1="477.7" x2="645.4" y2="472.3" stroke="#f4f6ee" stroke-opacity="0.52" stroke-width="1.1" stroke-linecap="round"/>
<line x1="743.1" y1="428.1" x2="748.8" y2="422.8" stroke="#f4f6ee" stroke-opacity="0.37" stroke-width="0.8" stroke-linecap="round"/>
<line x1="563.2" y1="573.3" x2="565.5" y2="574.0" stroke="#f4f6ee" stroke-opacity="0.17" stroke-width="1.2" stroke-linecap="round"/>
<line x1="699.0" y1="510.7" x2="702.7" y2="504.7" stroke="#f4f6ee" stroke-opacity="0.50" stroke-width="0.9" stroke-linecap="round"/>
<line x1="528.4" y1="486.3" x2="531.9" y2="486.3" stroke="#f4f6ee" stroke-opacity="0.34" stroke-width="0.9" stroke-linecap="round"/>
<line x1="648.1" y1="543.6" x2="650.0" y2="540.6" stroke="#f4f6ee" stroke-opacity="0.33" stroke-width="1.5" stroke-linecap="round"/>
<line x1="744.7" y1="450.5" x2="749.0" y2="443.1" stroke="#f4f6ee" stroke-opacity="0.43" stroke-width="1.6" stroke-linecap="round"/>
<line x1="671.0" y1="397.9" x2="674.1" y2="393.9" stroke="#f4f6ee" stroke-opacity="0.32" stroke-width="1.4" stroke-linecap="round"/>
<line x1="484.8" y1="617.0" x2="482.4" y2="615.9" stroke="#f4f6ee" stroke-opacity="0.26" stroke-width="0.9" stroke-linecap="round"/>
<line x1="647.3" y1="520.0" x2="649.3" y2="517.5" stroke="#f4f6ee" stroke-opacity="0.28" stroke-width="1.3" stroke-linecap="round"/>
<line x1="466.5" y1="554.7" x2="468.4" y2="552.7" stroke="#f4f6ee" stroke-opacity="0.28" stroke-width="0.9" stroke-linecap="round"/>
<line x1="544.3" y1="633.2" x2="548.1" y2="632.7" stroke="#f4f6ee" stroke-opacity="0.18" stroke-width="0.9" stroke-linecap="round"/>
<line x1="757.8" y1="417.8" x2="761.6" y2="413.1" stroke="#f4f6ee" stroke-opacity="0.29" stroke-width="1.2" stroke-linecap="round"/>
<line x1="479.0" y1="542.0" x2="481.0" y2="539.8" stroke="#f4f6ee" stroke-opacity="0.19" stroke-width="1.1" stroke-linecap="round"/>
<line x1="494.3" y1="420.8" x2="492.6" y2="422.5" stroke="#f4f6ee" stroke-opacity="0.25" stroke-width="1.5" stroke-linecap="round"/>
<line x1="605.5" y1="617.9" x2="606.7" y2="620.9" stroke="#f4f6ee" stroke-opacity="0.20" stroke-width="1.4" stroke-linecap="round"/>
<line x1="474.9" y1="461.5" x2="476.5" y2="460.2" stroke="#f4f6ee" stroke-opacity="0.25" stroke-width="1.0" stroke-linecap="round"/>
<line x1="762.3" y1="408.0" x2="765.9" y2="402.7" stroke="#f4f6ee" stroke-opacity="0.43" stroke-width="1.4" stroke-linecap="round"/>
<line x1="692.2" y1="401.5" x2="695.1" y2="398.0" stroke="#f4f6ee" stroke-opacity="0.54" stroke-width="0.8" stroke-linecap="round"/>
<line x1="573.8" y1="409.2" x2="574.0" y2="411.6" stroke="#f4f6ee" stroke-opacity="0.29" stroke-width="0.9" stroke-linecap="round"/>
<line x1="492.3" y1="448.2" x2="489.7" y2="448.6" stroke="#f4f6ee" stroke-opacity="0.35" stroke-width="1.4" stroke-linecap="round"/>
<line x1="602.1" y1="530.7" x2="607.6" y2="525.3" stroke="#f4f6ee" stroke-opacity="0.48" stroke-width="1.3" stroke-linecap="round"/>
<line x1="492.6" y1="568.7" x2="491.8" y2="572.3" stroke="#f4f6ee" stroke-opacity="0.17" stroke-width="1.4" stroke-linecap="round"/>
<line x1="705.8" y1="423.1" x2="711.5" y2="417.5" stroke="#f4f6ee" stroke-opacity="0.52" stroke-width="1.4" stroke-linecap="round"/>
<line x1="645.2" y1="512.3" x2="650.7" y2="506.5" stroke="#f4f6ee" stroke-opacity="0.51" stroke-width="1.0" stroke-linecap="round"/>
<line x1="513.3" y1="632.0" x2="512.5" y2="629.7" stroke="#f4f6ee" stroke-opacity="0.24" stroke-width="1.0" stroke-linecap="round"/>
<line x1="567.9" y1="615.8" x2="569.4" y2="619.1" stroke="#f4f6ee" stroke-opacity="0.34" stroke-width="1.5" stroke-linecap="round"/>
<line x1="573.4" y1="408.9" x2="571.7" y2="411.7" stroke="#f4f6ee" stroke-opacity="0.22" stroke-width="1.3" stroke-linecap="round"/>
<line x1="416.8" y1="528.2" x2="415.2" y2="526.9" stroke="#f4f6ee" stroke-opacity="0.31" stroke-width="1.1" stroke-linecap="round"/>
<line x1="650.9" y1="518.9" x2="653.6" y2="514.7" stroke="#f4f6ee" stroke-opacity="0.36" stroke-width="1.5" stroke-linecap="round"/>
<line x1="656.5" y1="469.8" x2="658.5" y2="466.9" stroke="#f4f6ee" stroke-opacity="0.46" stroke-width="1.2" stroke-linecap="round"/>
<line x1="462.1" y1="585.8" x2="461.2" y2="587.7" stroke="#f4f6ee" stroke-opacity="0.19" stroke-width="1.0" stroke-linecap="round"/>
<line x1="502.4" y1="647.3" x2="499.9" y2="649.3" stroke="#f4f6ee" stroke-opacity="0.23" stroke-width="1.2" stroke-linecap="round"/>
<line x1="738.9" y1="431.2" x2="742.0" y2="425.8" stroke="#f4f6ee" stroke-opacity="0.30" stroke-width="1.6" stroke-linecap="round"/>
<line x1="592.3" y1="623.4" x2="593.8" y2="621.4" stroke="#f4f6ee" stroke-opacity="0.17" stroke-width="1.2" stroke-linecap="round"/>
<line x1="444.6" y1="568.3" x2="441.8" y2="569.1" stroke="#f4f6ee" stroke-opacity="0.22" stroke-width="1.3" stroke-linecap="round"/>
<line x1="661.5" y1="494.6" x2="665.5" y2="490.0" stroke="#f4f6ee" stroke-opacity="0.52" stroke-width="1.2" stroke-linecap="round"/>
<line x1="681.6" y1="548.6" x2="685.4" y2="544.4" stroke="#f4f6ee" stroke-opacity="0.52" stroke-width="1.4" stroke-linecap="round"/>
<line x1="707.4" y1="393.4" x2="710.1" y2="389.2" stroke="#f4f6ee" stroke-opacity="0.54" stroke-width="1.5" stroke-linecap="round"/>
<line x1="471.4" y1="557.5" x2="468.3" y2="556.6" stroke="#f4f6ee" stroke-opacity="0.23" stroke-width="1.4" stroke-linecap="round"/>
<line x1="665.2" y1="466.4" x2="669.5" y2="460.2" stroke="#f4f6ee" stroke-opacity="0.41" stroke-width="1.1" stroke-linecap="round"/>
<line x1="523.2" y1="431.1" x2="521.8" y2="433.9" stroke="#f4f6ee" stroke-opacity="0.31" stroke-width="1.1" stroke-linecap="round"/>
<line x1="469.6" y1="536.2" x2="467.6" y2="533.1" stroke="#f4f6ee" stroke-opacity="0.30" stroke-width="0.9" stroke-linecap="round"/>
<line x1="536.7" y1="398.9" x2="538.6" y2="397.1" stroke="#f4f6ee" stroke-opacity="0.34" stroke-width="1.6" stroke-linecap="round"/>
<line x1="488.0" y1="474.9" x2="486.7" y2="471.2" stroke="#f4f6ee" stroke-opacity="0.21" stroke-width="1.2" stroke-linecap="round"/>
<line x1="457.3" y1="460.3" x2="459.4" y2="458.4" stroke="#f4f6ee" stroke-opacity="0.34" stroke-width="1.0" stroke-linecap="round"/>
<line x1="494.6" y1="652.9" x2="493.0" y2="655.4" stroke="#f4f6ee" stroke-opacity="0.28" stroke-width="1.4" stroke-linecap="round"/>
<line x1="632.9" y1="582.2" x2="637.2" y2="576.0" stroke="#f4f6ee" stroke-opacity="0.36" stroke-width="1.5" stroke-linecap="round"/>
<line x1="621.4" y1="468.6" x2="625.3" y2="463.0" stroke="#f4f6ee" stroke-opacity="0.48" stroke-width="0.8" stroke-linecap="round"/>
<line x1="442.2" y1="545.9" x2="443.8" y2="549.1" stroke="#f4f6ee" stroke-opacity="0.23" stroke-width="1.4" stroke-linecap="round"/>
<line x1="458.4" y1="474.2" x2="455.2" y2="474.8" stroke="#f4f6ee" stroke-opacity="0.28" stroke-width="1.4" stroke-linecap="round"/>
<line x1="548.3" y1="499.6" x2="550.4" y2="496.7" stroke="#f4f6ee" stroke-opacity="0.19" stroke-width="1.5" stroke-linecap="round"/>
<line x1="622.4" y1="537.8" x2="627.4" y2="532.9" stroke="#f4f6ee" stroke-opacity="0.29" stroke-width="1.1" stroke-linecap="round"/>
<line x1="675.4" y1="554.6" x2="678.9" y2="550.4" stroke="#f4f6ee" stroke-opacity="0.33" stroke-width="1.5" stroke-linecap="round"/>
<line x1="474.0" y1="582.5" x2="477.5" y2="582.5" stroke="#f4f6ee" stroke-opacity="0.33" stroke-width="1.5" stroke-linecap="round"/>
<line x1="466.2" y1="592.1" x2="468.8" y2="594.3" stroke="#f4f6ee" stroke-opacity="0.21" stroke-width="0.9" stroke-linecap="round"/>
<ellipse cx="566" cy="454.5" rx="10" ry="11" fill="#d0e2c4" opacity="0.85"/>
<ellipse cx="403" cy="477" rx="4" ry="6.5" fill="#d0e2c4" opacity="0.85"/>
<ellipse cx="418" cy="472" rx="3" ry="3.5" fill="#d0e2c4" opacity="0.85"/>
<ellipse cx="506" cy="701" rx="10" ry="3.5" fill="#d0e2c4" opacity="0.85"/>
<ellipse cx="490.7" cy="715" rx="5" ry="9" fill="#d0e2c4" opacity="0.85"/>
<ellipse cx="537.5" cy="728.5" rx="5" ry="5" fill="#d0e2c4" opacity="0.85"/>
<ellipse cx="516.8" cy="748" rx="8" ry="5" fill="#d0e2c4" opacity="0.85"/>
<ellipse cx="563" cy="718" rx="4" ry="3" fill="#d0e2c4" opacity="0.85"/>
<ellipse cx="637.7" cy="719.5" rx="4" ry="5.5" fill="#d0e2c4" opacity="0.85"/>
<ellipse cx="563" cy="717" rx="3" ry="2" fill="#d0e2c4" opacity="0.85"/>
<ellipse cx="769" cy="643.5" rx="18" ry="10" fill="#d0e2c4" opacity="0.85"/>
<ellipse cx="755" cy="664.5" rx="5" ry="4" fill="#d0e2c4" opacity="0.85"/>
<ellipse cx="850" cy="622" rx="26" ry="13" fill="#d0e2c4" opacity="0.85"/>
<ellipse cx="943" cy="712" rx="9" ry="20" fill="#d0e2c4" opacity="0.85"/>
<ellipse cx="836" cy="407" rx="12" ry="9" fill="#d0e2c4" opacity="0.85"/>
<ellipse cx="792" cy="423" rx="6" ry="5" fill="#d0e2c4" opacity="0.85"/>
<ellipse cx="770" cy="548" rx="10" ry="5" fill="#d0e2c4" opacity="0.85"/>
<polygon points="971.4,383.0 983.6,383.0 979.0,395.2 968.3,406.0 960.6,418.2 959.1,432.0 963.7,444.2 953.0,450.3 950.0,462.6 953.0,478.0 957.6,487.0 965.2,493.2 972.9,503.0 961.6,519.3 974.4,527.0 985.0,532.0 1000.0,545.0 1024.0,556.0 1024.0,760.0 1000.0,760.0 998.0,747.0 993.0,725.5 988.5,696.7 983.7,677.5 978.5,681.7 963.0,679.5 952.5,668.7 941.7,651.0 937.3,638.0 950.0,627.5 956.8,612.0 952.5,595.0 956.5,590.0 961.6,579.3 956.0,566.0 945.0,557.0 935.7,548.0 926.5,541.8 914.3,538.8 903.6,532.7 896.0,523.5 883.7,519.0 876.0,520.4 866.8,514.3 865.3,496.0 877.6,486.7 886.7,480.6 891.3,473.0 893.0,476.0 880.6,484.5 873.0,493.5 871.4,505.0 876.0,512.8 886.7,514.3 894.4,509.0 902.0,520.0 914.3,526.0 932.7,535.7 948.0,549.0 957.0,541.8 948.0,526.5 945.0,514.3 941.8,496.0 935.7,480.6 932.7,465.3 935.7,450.0 946.9,444.2 936.1,436.6 942.3,430.5 940.7,422.8 948.4,418.2 945.3,410.6 953.0,402.9 965.2,392.2" fill="#b3d4df"/>
<polygon points="1017.0,383.0 1024.0,383.0 1024.0,400.0 1019.0,395.0" fill="#b3d4df"/>
<polyline points="908.0,566.0 925.0,578.0 940.0,590.0 955.0,600.0" fill="none" stroke="#b3d4df" stroke-width="3.5" stroke-linejoin="round" stroke-linecap="round"/>
<polyline points="905.0,598.0 922.0,606.0 938.0,617.0 952.0,622.0" fill="none" stroke="#b3d4df" stroke-width="3" stroke-linejoin="round" stroke-linecap="round"/>
<polyline points="866.0,626.0 885.0,628.0 905.0,633.0 926.0,634.0 940.0,640.0" fill="none" stroke="#b3d4df" stroke-width="3" stroke-linejoin="round" stroke-linecap="round"/>
<polyline points="969.8,407.5 989.7,404.4 995.8,403.0" fill="none" stroke="#b3d4df" stroke-width="3" stroke-linejoin="round" stroke-linecap="round"/>
<polyline points="965.2,421.3 977.5,419.7 986.7,421.3" fill="none" stroke="#b3d4df" stroke-width="2.5" stroke-linejoin="round" stroke-linecap="round"/>
<polyline points="959.0,432.0 968.3,433.5 971.4,441.2" fill="none" stroke="#b3d4df" stroke-width="4" stroke-linejoin="round" stroke-linecap="round"/>
<polyline points="950.0,462.6 962.2,468.7 971.4,474.8 980.5,481.0" fill="none" stroke="#b3d4df" stroke-width="3.5" stroke-linejoin="round" stroke-linecap="round"/>
<polyline points="954.5,487.0 968.3,493.2 977.5,490.0" fill="none" stroke="#b3d4df" stroke-width="3" stroke-linejoin="round" stroke-linecap="round"/>
<polyline points="940.7,412.0 950.0,415.0" fill="none" stroke="#b3d4df" stroke-width="3" stroke-linejoin="round" stroke-linecap="round"/>
<polyline points="934.6,433.5 945.3,429.0" fill="none" stroke="#b3d4df" stroke-width="2.5" stroke-linejoin="round" stroke-linecap="round"/>
<polyline points="914.0,524.0 918.0,515.0 922.0,508.0" fill="none" stroke="#b3d4df" stroke-width="2.5" stroke-linejoin="round" stroke-linecap="round"/>
<polyline points="930.0,533.0 934.0,522.0 937.0,510.0" fill="none" stroke="#b3d4df" stroke-width="2.5" stroke-linejoin="round" stroke-linecap="round"/>
<polyline points="763.0,705.0 772.0,712.0 781.0,715.0 787.0,722.0" fill="none" stroke="#b3d4df" stroke-width="2.5" stroke-linejoin="round" stroke-linecap="round"/>
<polyline points="803.0,711.0 815.0,714.0 828.0,716.0 836.0,720.0" fill="none" stroke="#b3d4df" stroke-width="2" stroke-linejoin="round" stroke-linecap="round"/>
<polygon points="1024.0,566.0 1011.0,580.0 995.8,599.0 985.0,621.0 979.0,640.0 977.0,652.0 983.0,656.0 987.0,660.0 1002.0,629.7 1015.0,603.7 1024.0,594.0" fill="#f2efe9"/>
<polyline points="1024,640 1008,700 1003,760" fill="none" stroke="#8f9cc4" stroke-width="1"/><polyline points="1024,700 1016,760" fill="none" stroke="#8f9cc4" stroke-width="1"/>
<polyline points="424.2,433.9 443.6,424.2 460.5,417.0 480.0,419.3 494.5,414.5" fill="none" stroke="#f3bf98" stroke-width="1.3"/>
<polyline points="463.0,421.8 465.4,438.7 475.0,436.3 482.3,426.6" fill="none" stroke="#f3bf98" stroke-width="1.3"/>
<polyline points="463.0,441.2 475.0,448.4 487.2,455.7" fill="none" stroke="#f3bf98" stroke-width="1.3"/>
<polyline points="383.0,441.2 395.0,443.6 412.0,436.3" fill="none" stroke="#f3bf98" stroke-width="1.3"/>
<polyline points="494.5,518.7 480.0,528.4 475.0,552.6 465.4,573.0 455.0,600.0 440.0,625.0" fill="none" stroke="#f3bf98" stroke-width="1.3"/>
<polyline points="574.4,487.2 564.7,518.7 552.6,540.5 538.0,557.5 535.7,573.0" fill="none" stroke="#f3bf98" stroke-width="1.3"/>
<polyline points="528.4,414.5 552.6,414.5 603.0,412.0 640.0,410.0" fill="none" stroke="#f3bf98" stroke-width="1.3"/>
<polyline points="383.0,540.5 397.5,552.6 395.0,573.0 390.0,600.0 400.0,630.0" fill="none" stroke="#f3bf98" stroke-width="1.3"/>
<polyline points="603.0,446.0 651.5,448.4 683.0,424.2 707.2,421.8 729.0,433.9 748.4,438.7 772.6,431.5" fill="none" stroke="#f3bf98" stroke-width="1.3"/>
<polyline points="639.3,443.6 641.8,480.0 658.7,496.9 675.7,509.0 704.8,528.4 716.9,540.5" fill="none" stroke="#f3bf98" stroke-width="1.3"/>
<polyline points="731.4,509.0 748.4,518.7 772.6,528.4" fill="none" stroke="#f3bf98" stroke-width="1.3"/>
<polyline points="683.0,383.0 695.0,392.7 709.6,383.0" fill="none" stroke="#f3bf98" stroke-width="1.3"/>
<polyline points="603.0,691.0 627.2,696.0 646.6,705.7 690.0,708.0" fill="none" stroke="#f3bf98" stroke-width="1.3"/>
<polyline points="712.0,623.3 738.7,628.0 763.0,633.0 787.2,642.7 823.0,647.5" fill="none" stroke="#f3bf98" stroke-width="1.3"/>
<polyline points="738.7,628.0 733.8,652.4 724.2,671.8 738.7,691.0 745.0,720.0" fill="none" stroke="#f3bf98" stroke-width="1.3"/>
<polyline points="763.0,570.0 767.8,589.4 772.6,618.5 767.8,642.7 753.2,681.5 763.0,705.7 758.0,739.6" fill="none" stroke="#f3bf98" stroke-width="1.3"/>
<polyline points="1024.0,574.8 997.8,608.8 978.5,642.7" fill="none" stroke="#f3bf98" stroke-width="1.3"/>
<polyline points="383.0,600.0 410.0,590.0 430.0,605.0" fill="none" stroke="#f3bf98" stroke-width="1.3"/>
<polyline points="450.0,720.0 480.0,730.0 520.0,725.0 560.0,735.0 600.0,720.0" fill="none" stroke="#f3bf98" stroke-width="1.3"/>
<polyline points="560.0,690.0 600.0,700.0 640.0,690.0" fill="none" stroke="#f3bf98" stroke-width="1.3"/>
<polyline points="700.0,730.0 740.0,735.0 780.0,740.0 823.0,735.0" fill="none" stroke="#f3bf98" stroke-width="1.3"/>
<polyline points="823.0,650.0 850.0,680.0 880.0,700.0 920.0,720.0 960.0,730.0" fill="none" stroke="#f3bf98" stroke-width="1.3"/>
<polyline points="880.0,560.0 900.0,590.0 905.0,615.0" fill="none" stroke="#f3bf98" stroke-width="1.3"/>
<polyline points="823.0,500.0 840.0,540.0 835.0,575.0" fill="none" stroke="#f3bf98" stroke-width="1.3"/>
<polyline points="955.0,480.0 970.0,520.0 990.0,540.0" fill="none" stroke="#f3bf98" stroke-width="1.3"/>
<polyline points="890.0,383.0 885.0,410.0 870.0,430.0" fill="none" stroke="#f3bf98" stroke-width="1.3"/>
<polyline points="925.0,600.0 900.0,580.0 880.0,570.0" fill="none" stroke="#f3bf98" stroke-width="1.3"/>
<polyline points="800.0,600.0 820.0,620.0 840.0,640.0" fill="none" stroke="#f3bf98" stroke-width="1.3"/>
<polyline points="615.0,740.0 640.0,750.0 660.0,745.0" fill="none" stroke="#f3bf98" stroke-width="1.3"/>
<polyline points="383.0,620.0 400.0,650.0 420.0,660.0" fill="none" stroke="#f3bf98" stroke-width="1.3"/>
<polyline points="520.0,710.0 540.0,740.0 555.0,760.0" fill="none" stroke="#f3bf98" stroke-width="1.3"/>
<polyline points="603.0,730.0 580.0,745.0 570.0,760.0" fill="none" stroke="#f3bf98" stroke-width="1.3"/>
<polyline points="880.0,440.0 885.0,430.0 895.0,428.0 904.0,436.0 906.0,450.0 900.0,462.0 890.0,466.0 880.0,460.0 876.0,450.0 880.0,440.0" fill="none" stroke="#e8a0ac" stroke-width="1.4"/>
<polyline points="915.0,410.0 922.0,404.0 932.0,405.0 938.0,414.0 935.0,424.0 925.0,428.0 916.0,423.0 915.0,410.0" fill="none" stroke="#e8a0ac" stroke-width="1.4"/>
<polyline points="840.0,383.0 850.0,400.0 859.7,400.0" fill="none" stroke="#e8a0ac" stroke-width="1.4"/>
<polyline points="896.0,407.2 905.0,395.0 913.0,383.0" fill="none" stroke="#e8a0ac" stroke-width="1.4"/>
<polyline points="928.0,414.0 945.0,395.0 960.0,383.0" fill="none" stroke="#e8a0ac" stroke-width="1.4"/>
<polyline points="905.0,438.7 915.0,428.0 925.0,420.0" fill="none" stroke="#e8a0ac" stroke-width="1.4"/>
<polyline points="886.0,450.8 900.0,440.0 915.0,428.0" fill="none" stroke="#e8a0ac" stroke-width="1.4"/>
<polyline points="891.0,463.0 905.0,470.0 930.0,478.0" fill="none" stroke="#e8a0ac" stroke-width="1.4"/>
<polyline points="870.0,470.0 860.0,490.0 850.0,510.0 840.0,525.0" fill="none" stroke="#e8a0ac" stroke-width="1.4"/>
<polyline points="840.0,460.0 825.0,480.0 815.0,510.0" fill="none" stroke="#e8a0ac" stroke-width="1.4"/>
<polyline points="900.0,470.0 905.0,495.0 900.0,520.0" fill="none" stroke="#e8a0ac" stroke-width="1.4"/>
<polyline points="950.0,455.0 960.0,470.0 975.0,500.0" fill="none" stroke="#e8a0ac" stroke-width="1.4"/>
<polyline points="985.0,455.0 1005.0,450.0 1024.0,455.0" fill="none" stroke="#e8a0ac" stroke-width="1.4"/>
<polyline points="1000.0,383.0 1003.0,420.0 1005.0,440.0" fill="none" stroke="#e8a0ac" stroke-width="1.4"/>
<polyline points="830.0,420.0 845.0,430.0 860.0,432.0 880.0,440.0" fill="none" stroke="#e8a0ac" stroke-width="1.4"/>
<polyline points="513.8,383.0 515.0,402.4 504.0,414.5 489.6,450.8 487.2,458.0 495.7,484.8 496.9,513.8 504.2,526.0 513.8,533.2 523.5,552.6 530.8,573.0 535.7,582.0 543.0,599.0 543.0,623.3 540.5,642.7 547.8,662.0 567.2,674.2 574.4,696.0 576.8,715.4 567.2,760.0" fill="none" stroke="#e48d9d" stroke-width="1.8"/>
<polyline points="496.9,513.8 509.0,501.7 528.4,492.0 552.6,489.6 572.0,488.4 576.8,480.0 584.0,460.5 593.8,450.8 603.0,431.5 612.7,414.5 622.4,397.5 639.3,383.0" fill="none" stroke="#e48d9d" stroke-width="1.8"/>
<polyline points="496.9,513.8 479.9,509.0 455.7,506.6 426.6,510.2 383.0,515.0" fill="none" stroke="#e48d9d" stroke-width="1.8"/>
<polyline points="383.0,455.7 390.3,453.3 397.5,455.7 417.0,453.3 431.5,458.0 453.3,463.0 465.4,472.7 470.2,487.2 475.0,509.0" fill="none" stroke="#e48d9d" stroke-width="1.8"/>
<polyline points="383.0,472.7 392.7,475.0 397.5,492.0 409.6,496.9 414.5,509.0" fill="none" stroke="#e48d9d" stroke-width="1.8"/>
<polyline points="804.0,383.0 796.8,414.5 787.2,436.3 758.0,463.0 746.0,487.2 738.7,504.2 724.2,528.4 712.0,547.8 695.0,567.0 687.8,573.0 670.0,590.0 655.0,615.0 643.0,633.0 620.0,652.0 603.0,666.9 572.0,676.6 528.4,681.5 492.0,683.9 463.0,698.4 441.2,713.0 414.5,739.6 397.5,760.0" fill="none" stroke="#e48d9d" stroke-width="1.8"/>
<polyline points="670.8,569.6 695.0,557.5 716.9,540.5 738.7,543.0 760.5,552.6 792.0,547.8 823.0,543.0 850.0,560.0 857.3,606.3" fill="none" stroke="#e48d9d" stroke-width="1.8"/>
<polyline points="794.4,426.6 782.3,443.6 763.0,467.8 750.8,482.3" fill="none" stroke="#e48d9d" stroke-width="1.8"/>
<polyline points="772.6,446.0 796.8,455.7 823.0,460.5 840.3,460.5 876.7,460.5" fill="none" stroke="#e48d9d" stroke-width="1.8"/>
<polyline points="854.9,523.5 859.7,494.5 869.4,475.0 884.0,455.7 905.8,438.7 925.0,417.0 939.7,397.5 954.0,383.0" fill="none" stroke="#e48d9d" stroke-width="1.8"/>
<polyline points="859.7,400.0 876.7,429.0 886.4,450.8" fill="none" stroke="#e48d9d" stroke-width="1.8"/>
<polyline points="804.0,409.7 859.7,400.0 896.0,407.2 927.6,414.5" fill="none" stroke="#e48d9d" stroke-width="1.8"/>
<polyline points="905.8,438.7 939.7,450.8 961.5,446.0 985.7,455.7 997.8,480.0 1014.8,504.2 1024.0,528.4" fill="none" stroke="#e48d9d" stroke-width="1.8"/>
<polyline points="1010.0,383.0 1012.4,407.2 1022.0,431.5" fill="none" stroke="#e48d9d" stroke-width="1.8"/>
<polyline points="813.7,518.7 852.5,511.4 881.5,489.6" fill="none" stroke="#e48d9d" stroke-width="1.8"/>
<polyline points="552.6,625.7 576.8,618.5 603.0,611.2" fill="none" stroke="#e48d9d" stroke-width="1.8"/>
<polyline points="383.0,683.9 417.0,720.0 431.5,739.6 438.7,760.0" fill="none" stroke="#e48d9d" stroke-width="1.8"/>
<polyline points="709.6,621.0 704.8,642.7 695.0,667.0 690.2,691.0 690.2,708.0 675.7,727.5 663.6,760.0" fill="none" stroke="#e48d9d" stroke-width="1.8"/>
<polyline points="823.0,720.2 792.0,727.5 760.5,744.5 743.5,760.0" fill="none" stroke="#e48d9d" stroke-width="1.8"/>
<polyline points="603.0,577.3 627.2,579.7 651.5,577.3 675.7,570.0" fill="none" stroke="#e48d9d" stroke-width="1.8"/>
<polyline points="828.2,760.0 838.0,715.4 847.6,691.0 859.7,667.0 862.2,642.7 857.3,606.3" fill="none" stroke="#e48d9d" stroke-width="1.8"/>
<polyline points="864.6,608.8 888.8,618.5 910.6,633.0 930.0,650.0 949.4,667.0 964.0,674.2 978.5,676.6" fill="none" stroke="#e48d9d" stroke-width="1.8"/>
<polyline points="859.7,640.3 840.3,662.0 818.5,679.0 804.0,691.0 770.0,700.0 740.0,705.0" fill="none" stroke="#e48d9d" stroke-width="1.8"/>
<polyline points="804.0,587.0 828.2,591.8 857.3,606.3" fill="none" stroke="#e48d9d" stroke-width="1.8"/>
<polyline points="915.5,570.0 925.0,594.0" fill="none" stroke="#e48d9d" stroke-width="1.8"/>
<polyline points="664.0,637.0 700.0,628.0 711.0,619.5" fill="none" stroke="#e48d9d" stroke-width="1.8"/>
<polyline points="383.0,707.0 597.0,711.0 811.0,713.0 998.0,712.0" fill="none" stroke="#a7a2b8" stroke-width="1.1"/>
<polyline points="383.0,677.6 407.0,651.0 443.0,632.0 462.0,605.6 450.0,596.0 438.0,586.0 431.0,572.0 425.0,575.0 416.0,550.0 412.0,530.0 415.0,515.0 442.0,491.0 449.0,469.0 454.0,464.0 464.0,444.0 476.0,456.5 483.4,451.6 488.0,429.5 495.7,417.3 505.5,407.5 515.0,405.0 530.0,397.7 549.6,383.0" fill="none" stroke="#a7a2b8" stroke-width="1.1"/>
<polyline points="462.0,605.6 472.0,630.0 490.0,640.0 539.0,615.0 565.0,620.0 597.0,613.0 614.0,601.0 621.0,572.0 626.0,566.0 645.0,537.0 659.6,518.0 667.0,491.4 698.0,508.0 710.0,498.7 727.0,465.0 741.6,455.0 770.5,426.0 765.7,414.0 732.0,392.6 681.3,421.6 681.3,383.0" fill="none" stroke="#a7a2b8" stroke-width="1.1"/>
<polyline points="1001.0,383.0 1007.0,503.5" fill="none" stroke="#a7a2b8" stroke-width="1.1"/>
<polyline points="957.6,563.0 1000.0,565.0 1024.0,560.0" fill="none" stroke="#a7a2b8" stroke-width="1.1"/>
<circle cx="503" cy="417" r="1.9" fill="#fff" stroke="#666" stroke-width="0.8"/>
<circle cx="809" cy="397" r="1.9" fill="#fff" stroke="#666" stroke-width="0.8"/>
<circle cx="859" cy="400" r="1.9" fill="#fff" stroke="#666" stroke-width="0.8"/>
<circle cx="928.6" cy="401.8" r="1.9" fill="#fff" stroke="#666" stroke-width="0.8"/>
<circle cx="928.6" cy="413.8" r="1.9" fill="#fff" stroke="#666" stroke-width="0.8"/>
<circle cx="794.9" cy="426.8" r="1.9" fill="#fff" stroke="#666" stroke-width="0.8"/>
<circle cx="878.5" cy="431" r="1.9" fill="#fff" stroke="#666" stroke-width="0.8"/>
<circle cx="937.5" cy="448.5" r="1.9" fill="#fff" stroke="#666" stroke-width="0.8"/>
<circle cx="973.7" cy="471.7" r="1.9" fill="#fff" stroke="#666" stroke-width="0.8"/>
<circle cx="902" cy="487.8" r="1.9" fill="#fff" stroke="#666" stroke-width="0.8"/>
<circle cx="1015.3" cy="515.5" r="1.9" fill="#fff" stroke="#666" stroke-width="0.8"/>
<circle cx="734.4" cy="506.4" r="1.9" fill="#fff" stroke="#666" stroke-width="0.8"/>
<circle cx="854.9" cy="522" r="1.9" fill="#fff" stroke="#666" stroke-width="0.8"/>
<circle cx="717.5" cy="539.6" r="1.9" fill="#fff" stroke="#666" stroke-width="0.8"/>
<circle cx="497.6" cy="517.7" r="1.9" fill="#fff" stroke="#666" stroke-width="0.8"/>
<circle cx="427" cy="509.9" r="1.9" fill="#fff" stroke="#666" stroke-width="0.8"/>
<circle cx="535.4" cy="580.4" r="1.9" fill="#fff" stroke="#666" stroke-width="0.8"/>
<circle cx="420.2" cy="612.3" r="1.9" fill="#fff" stroke="#666" stroke-width="0.8"/>
<circle cx="531.8" cy="634.4" r="1.9" fill="#fff" stroke="#666" stroke-width="0.8"/>
<circle cx="435.3" cy="737.5" r="1.9" fill="#fff" stroke="#666" stroke-width="0.8"/>
<circle cx="492.9" cy="748.3" r="1.9" fill="#fff" stroke="#666" stroke-width="0.8"/>
<circle cx="642.6" cy="634.9" r="1.9" fill="#fff" stroke="#666" stroke-width="0.8"/>
<circle cx="711" cy="619.5" r="1.9" fill="#fff" stroke="#666" stroke-width="0.8"/>
<circle cx="690" cy="708.3" r="1.9" fill="#fff" stroke="#666" stroke-width="0.8"/>
<circle cx="861" cy="639.6" r="1.9" fill="#fff" stroke="#666" stroke-width="0.8"/>
<circle cx="944" cy="666.7" r="1.9" fill="#fff" stroke="#666" stroke-width="0.8"/>
<circle cx="930.5" cy="692.7" r="1.9" fill="#fff" stroke="#666" stroke-width="0.8"/>
<circle cx="982.5" cy="680" r="1.9" fill="#fff" stroke="#666" stroke-width="0.8"/>
<circle cx="961.6" cy="740" r="1.9" fill="#fff" stroke="#666" stroke-width="0.8"/>
<circle cx="837.4" cy="722.6" r="1.9" fill="#fff" stroke="#666" stroke-width="0.8"/>
<circle cx="456.6" cy="410" r="1.9" fill="#fff" stroke="#666" stroke-width="0.8"/>
<circle cx="607.5" cy="415" r="1.9" fill="#fff" stroke="#666" stroke-width="0.8"/>
<g font-family="Liberation Sans" fill="#4a4a4a" stroke="#fff" stroke-width="2" stroke-opacity="0.7" paint-order="stroke">
<text x="383" y="420" font-size="10">cot</text>
<text x="441.8" y="420.5" font-size="10">Athens</text>
<text x="508" y="420.5" font-size="10">Parkersburg</text>
<text x="583.6" y="411.5" font-size="10">Clarksburg</text>
<text x="753.6" y="399" font-size="10">Martinsburg</text>
<text x="840" y="396" font-size="10">Frederick</text>
<text x="913.4" y="397.5" font-size="10">Towson</text>
<text x="903.8" y="427.5" font-size="12.5">Baltimore</text>
<text x="770" y="425" font-size="10">Winchester</text>
<text x="849.6" y="441.5" font-size="10">Gaithersburg</text>
<text x="917" y="444.5" font-size="10">Annapolis</text>
<text x="861.6" y="474.5" font-size="13">Washington</text>
<text x="960" y="467" font-size="10">Easton</text>
<text x="885.7" y="498" font-size="10">Waldorf</text>
<text x="1002.6" y="433.5" font-size="10" font-style="italic" fill="#8c7aa0">Dela</text>
<text x="995.3" y="512" font-size="10">Salisbury</text>
<text x="705.4" y="503.5" font-size="10">Harrisonburg</text>
<text x="789.8" y="500.5" font-size="10">Culpeper</text>
<text x="821.8" y="533.5" font-size="10">Fredericksburg</text>
<text x="920.6" y="538.5" font-size="10">Lexington</text>
<text x="932.7" y="549" font-size="10">Park</text>
<text x="697" y="536" font-size="10">Staunton</text>
<text x="589.3" y="457" font-size="10.5" font-style="italic" fill="#8c7aa0">West Virginia</text>
<text x="770.5" y="558" font-size="10.5" font-style="italic" fill="#8c7aa0">Virginia</text>
<text x="473.6" y="514" font-size="10">Charleston</text>
<text x="402.6" y="506.5" font-size="10">Huntington</text>
<text x="518.6" y="577.5" font-size="10">Beckley</text>
<text x="403.4" y="608.5" font-size="10">Pikeville</text>
<text x="513.8" y="631.5" font-size="10">Bluefield</text>
<text x="577.3" y="650.5" font-size="10">Blacksburg</text>
<text x="416.6" y="723" font-size="10">Johnson</text>
<text x="427.4" y="734" font-size="10">City</text>
<text x="479" y="758" font-size="10">Boone</text>
<text x="623.4" y="632" font-size="10">Roanoke</text>
<text x="687.7" y="616.5" font-size="10">Lynchburg</text>
<text x="672.6" y="705" font-size="10">Danville</text>
<text x="572.5" y="758.5" font-size="10">Winston-</text>
<text x="629.4" y="759.5" font-size="10">Greensboro</text>
<text x="831.4" y="620.5" font-size="12.5">Richmond</text>
<text x="836.2" y="651" font-size="10">Petersburg</text>
<text x="925" y="652" font-size="10">Newport</text>
<text x="935.7" y="662.5" font-size="10">News</text>
<text x="896" y="697.5" font-size="10">Suffolk</text>
<text x="944" y="694.5" font-size="12.5">Virginia Beach</text>
<text x="941.7" y="724" font-size="10">Elizabeth</text>
<text x="954" y="735.5" font-size="10">City</text>
<text x="819.4" y="733.5" font-size="10">Roanoke</text>
<text x="824" y="744.5" font-size="10">Rapids</text>
</g>
<g fill="none" stroke="#3a68de" stroke-width="2.6" stroke-opacity="0.48" stroke-linecap="round">
<path d="M487.4,662.0 Q468.6,641.2 441.8,633.2"/>
<path d="M487.4,662.0 Q473.9,639.5 450.7,627.2"/>
<path d="M487.4,662.0 Q431.3,661.4 383.0,690.0"/>
<path d="M487.4,662.0 Q430.2,665.4 383.0,698.0"/>
<path d="M487.4,662.0 Q498.9,654.6 504.9,642.3"/>
<path d="M487.4,662.0 Q507.3,652.5 519.3,634.0"/>
<path d="M487.4,662.0 Q514.9,662.3 538.5,648.3"/>
<path d="M487.4,662.0 Q505.5,666.7 523.4,661.3"/>
<path d="M487.4,662.0 Q499.2,673.9 515.4,678.0"/>
<path d="M487.4,662.0 Q525.8,679.4 567.7,674.4"/>
<path d="M487.4,662.0 Q486.9,674.5 492.9,685.5"/>
<path d="M487.4,662.0 Q472.8,675.9 467.5,695.3"/>
<path d="M487.4,662.0 Q462.6,680.0 450.7,708.3"/>
<path d="M664.0,637.0 Q685.9,614.8 693.0,584.5"/>
<path d="M664.0,637.0 Q682.3,625.4 692.0,606.0"/>
<path d="M664.0,637.0 Q704.1,622.9 731.0,590.0"/>
<path d="M664.0,637.0 Q717.4,634.2 761.6,604.0"/>
<path d="M664.0,637.0 Q647.8,624.9 627.7,623.0"/>
<path d="M664.0,637.0 Q623.7,629.5 585.3,644.0"/>
<path d="M664.0,637.0 Q644.0,637.1 627.0,647.6"/>
<path d="M664.0,637.0 Q639.6,643.1 622.0,661.0"/>
<path d="M664.0,637.0 Q645.4,645.8 634.0,663.0"/>
<path d="M664.0,637.0 Q650.3,641.0 640.7,651.6"/>
<path d="M664.0,637.0 Q661.9,661.5 672.8,683.6"/>
<path d="M664.0,637.0 Q643.5,660.1 638.0,690.5"/>
<path d="M664.0,637.0 Q647.9,664.7 648.6,696.8"/>
<path d="M664.0,637.0 Q654.3,674.2 665.4,711.0"/>
<path d="M664.0,637.0 Q683.2,682.0 723.0,710.4"/>
<path d="M664.0,637.0 Q699.8,684.2 754.9,706.0"/>
<path d="M664.0,637.0 Q716.3,683.9 785.3,696.8"/>
<path d="M664.0,637.0 Q688.9,571.0 675.8,501.6"/>
<path d="M664.0,637.0 Q692.5,595.4 695.3,545.0"/>
<path d="M664.0,637.0 Q669.8,591.6 651.2,549.7"/>
<path d="M664.0,637.0 Q685.7,614.8 692.8,584.6"/>
<path d="M815.5,510.0 Q824.4,469.1 810.8,429.5"/>
<path d="M815.5,510.0 Q830.3,473.0 823.8,433.6"/>
<path d="M815.5,510.0 Q836.2,482.8 839.7,448.8"/>
<path d="M815.5,510.0 Q844.8,483.7 856.2,446.0"/>
<path d="M815.5,510.0 Q837.4,490.2 845.8,462.0"/>
<path d="M815.5,510.0 Q830.6,490.4 833.4,465.8"/>
<path d="M815.5,510.0 Q837.1,499.1 849.9,478.5"/>
<path d="M815.5,510.0 Q829.2,500.8 836.1,485.9"/>
<path d="M815.5,510.0 Q843.3,492.9 858.1,463.9"/>
<path d="M815.5,510.0 Q853.4,496.5 878.8,465.3"/>
<path d="M815.5,510.0 Q859.7,495.3 889.8,459.8"/>
<path d="M815.5,510.0 Q859.2,499.3 891.1,467.5"/>
<path d="M815.5,510.0 Q804.9,482.9 781.7,465.3"/>
<path d="M815.5,510.0 Q777.0,478.1 727.5,470.8"/>
<path d="M815.5,510.0 Q808.8,501.1 798.5,496.9"/>
<path d="M815.5,510.0 Q804.2,507.2 793.0,510.6"/>
<path d="M815.5,510.0 Q796.3,519.2 784.6,537.1"/>
<path d="M815.5,510.0 Q786.1,522.6 767.5,548.6"/>
<path d="M815.5,510.0 Q770.3,520.4 737.0,552.8"/>
<path d="M815.5,510.0 Q775.1,523.9 747.9,556.8"/>
<path d="M815.5,510.0 Q815.6,537.0 829.8,560.0"/>
<path d="M815.5,510.0 Q820.2,539.7 839.7,562.7"/>
<path d="M815.5,510.0 Q786.8,545.1 780.5,590.0"/>
<path d="M815.5,510.0 Q796.7,549.2 801.0,592.4"/>
<path d="M815.5,510.0 Q849.2,543.2 895.3,554.0"/>
<path d="M815.5,510.0 Q850.1,545.8 898.2,558.4"/>
<path d="M914.6,641.6 Q892.7,603.3 854.2,582.0"/>
<path d="M914.6,641.6 Q895.1,609.6 861.9,592.4"/>
<path d="M914.6,641.6 Q890.8,615.7 857.0,606.0"/>
<path d="M914.6,641.6 Q880.6,619.8 840.3,618.8"/>
<path d="M914.6,641.6 Q885.4,624.1 851.3,624.3"/>
<path d="M914.6,641.6 Q889.1,625.7 859.0,625.3"/>
<path d="M914.6,641.6 Q923.2,609.3 913.7,577.3"/>
<path d="M914.6,641.6 Q926.9,631.5 932.1,616.4"/>
<path d="M914.6,641.6 Q929.5,641.9 942.4,634.4"/>
<path d="M914.6,641.6 Q947.9,647.7 979.6,635.6"/>
<path d="M914.6,641.6 Q949.3,651.5 984.2,642.0"/>
<path d="M914.6,641.6 Q859.2,633.6 807.7,655.5"/>
<path d="M914.6,641.6 Q885.0,643.4 860.7,660.3"/>
<path d="M914.6,641.6 Q919.8,655.3 931.4,664.3"/>
<path d="M914.6,641.6 Q917.7,662.8 931.4,679.2"/>
<path d="M914.6,641.6 Q925.9,664.1 947.2,677.5"/>
<path d="M914.6,641.6 Q936.7,665.8 968.1,675.0"/>
<path d="M914.6,641.6 Q929.6,668.0 956.1,682.8"/>
<path d="M914.6,641.6 Q933.2,671.1 964.5,686.6"/>
<path d="M914.6,641.6 Q937.8,680.4 977.7,701.5"/>
<path d="M914.6,641.6 Q904.3,667.4 908.9,694.8"/>
<path d="M914.6,641.6 Q884.6,670.0 873.8,709.9"/>
<path d="M914.6,641.6 Q978.6,619.8 1022.0,568.0"/>
<path d="M914.6,641.6 Q851.9,653.5 804.5,696.3"/>
<path d="M914.6,641.6 Q846.7,658.2 797.3,707.6"/>
</g>
<g fill="#2a52d4" fill-opacity="0.86" stroke="#1f4bd8" stroke-width="1.2">
<circle cx="441.8" cy="633.2" r="6"/>
<circle cx="450.7" cy="627.2" r="3.5"/>
<circle cx="398.6" cy="674.7" r="6.5"/>
<circle cx="504.9" cy="642.3" r="5"/>
<circle cx="519.3" cy="634" r="6"/>
<circle cx="538.5" cy="648.3" r="3.5"/>
<circle cx="523.4" cy="661.3" r="8"/>
<circle cx="515.4" cy="678" r="7.5"/>
<circle cx="567.7" cy="674.4" r="5.5"/>
<circle cx="492.9" cy="685.5" r="2.5"/>
<circle cx="467.5" cy="695.3" r="5.5"/>
<circle cx="450.7" cy="708.3" r="2.5"/>
<circle cx="585.3" cy="644" r="2.5"/>
<circle cx="693" cy="584.5" r="5.3"/>
<circle cx="692" cy="606" r="3.5"/>
<circle cx="731" cy="590" r="2.5"/>
<circle cx="761.6" cy="604" r="7"/>
<circle cx="780.5" cy="590" r="9"/>
<circle cx="801" cy="592.4" r="8"/>
<circle cx="627.7" cy="623" r="6.5"/>
<circle cx="601.3" cy="646" r="4.5"/>
<circle cx="627" cy="647.6" r="9"/>
<circle cx="622" cy="661" r="8.5"/>
<circle cx="634" cy="663" r="6.5"/>
<circle cx="640.7" cy="651.6" r="3.5"/>
<circle cx="672.8" cy="683.6" r="3.5"/>
<circle cx="638" cy="690.5" r="2.5"/>
<circle cx="648.6" cy="696.8" r="7.5"/>
<circle cx="665.4" cy="711" r="4.5"/>
<circle cx="723" cy="710.4" r="6.5"/>
<circle cx="754.9" cy="706" r="7.5"/>
<circle cx="785.3" cy="696.8" r="3.5"/>
<circle cx="804.5" cy="696.3" r="8"/>
<circle cx="797.3" cy="707.6" r="5.5"/>
<circle cx="807.7" cy="655.5" r="4.5"/>
<circle cx="854.2" cy="582" r="7"/>
<circle cx="861.9" cy="592.4" r="7"/>
<circle cx="857" cy="606" r="9"/>
<circle cx="840.3" cy="618.8" r="3.5"/>
<circle cx="851.3" cy="624.3" r="2.5"/>
<circle cx="859" cy="625.3" r="6"/>
<circle cx="913.7" cy="577.3" r="5"/>
<circle cx="932.1" cy="616.4" r="7"/>
<circle cx="942.4" cy="634.4" r="5.5"/>
<circle cx="979.6" cy="635.6" r="6"/>
<circle cx="984.2" cy="642" r="4.5"/>
<circle cx="860.7" cy="660.3" r="6"/>
<circle cx="931.4" cy="664.3" r="9"/>
<circle cx="931.4" cy="679.2" r="8"/>
<circle cx="947.2" cy="677.5" r="4.5"/>
<circle cx="968.1" cy="675" r="5"/>
<circle cx="956.1" cy="682.8" r="7.5"/>
<circle cx="964.5" cy="686.6" r="8.5"/>
<circle cx="977.7" cy="701.5" r="8"/>
<circle cx="908.9" cy="694.8" r="4"/>
<circle cx="873.8" cy="709.9" r="5.5"/>
<circle cx="1022" cy="568" r="4"/>
<circle cx="810.8" cy="429.5" r="7.5"/>
<circle cx="823.8" cy="433.6" r="7.5"/>
<circle cx="839.7" cy="448.8" r="7.5"/>
<circle cx="856.2" cy="446" r="5"/>
<circle cx="845.8" cy="462" r="8.5"/>
<circle cx="833.4" cy="465.8" r="4.5"/>
<circle cx="849.9" cy="478.5" r="8"/>
<circle cx="836.1" cy="485.9" r="8"/>
<circle cx="834.8" cy="483" r="5"/>
<circle cx="858.1" cy="463.9" r="6"/>
<circle cx="878.8" cy="465.3" r="2.5"/>
<circle cx="889.8" cy="459.8" r="4.5"/>
<circle cx="891.1" cy="467.5" r="7.5"/>
<circle cx="781.7" cy="465.3" r="7"/>
<circle cx="727.5" cy="470.8" r="6.5"/>
<circle cx="798.5" cy="496.9" r="4.5"/>
<circle cx="793" cy="510.6" r="4.5"/>
<circle cx="784.6" cy="537.1" r="4.5"/>
<circle cx="767.5" cy="548.6" r="5.5"/>
<circle cx="737" cy="552.8" r="7"/>
<circle cx="747.9" cy="556.8" r="8"/>
<circle cx="829.8" cy="560" r="6.5"/>
<circle cx="839.7" cy="562.7" r="6"/>
<circle cx="675.8" cy="501.6" r="7"/>
<circle cx="695.3" cy="545" r="7"/>
<circle cx="651.2" cy="549.7" r="6.5"/>
<circle cx="692.8" cy="584.6" r="5.5"/>
<circle cx="895.3" cy="554" r="8"/>
<circle cx="898.2" cy="558.4" r="7"/>
</g>
<ellipse cx="498.4" cy="657" rx="13" ry="5.5" fill="#222" opacity="0.35" filter="url(#blur)" transform="rotate(-25 498.4 657)"/><path d="M487.4,662.0 C483.4,655.5 474.1,646.5 474.1,637.5 A13.3,13.3 0 1 1 500.7,637.5 C500.7,646.5 491.4,655.5 487.4,662.0 Z" fill="#f19e4c" stroke="#d6852f" stroke-width="1"/><circle cx="487.4" cy="637.5" r="7" fill="#fff" stroke="#e38c35" stroke-width="0.9"/>
<ellipse cx="675" cy="632" rx="13" ry="5.5" fill="#222" opacity="0.35" filter="url(#blur)" transform="rotate(-25 675 632)"/><path d="M664.0,637.0 C660.0,630.5 650.7,621.5 650.7,612.5 A13.3,13.3 0 1 1 677.3,612.5 C677.3,621.5 668.0,630.5 664.0,637.0 Z" fill="#f19e4c" stroke="#d6852f" stroke-width="1"/><circle cx="664.0" cy="612.5" r="7" fill="#fff" stroke="#e38c35" stroke-width="0.9"/>
<ellipse cx="826.5" cy="505" rx="13" ry="5.5" fill="#222" opacity="0.35" filter="url(#blur)" transform="rotate(-25 826.5 505)"/><path d="M815.5,510.0 C811.5,503.5 802.2,494.5 802.2,485.5 A13.3,13.3 0 1 1 828.8,485.5 C828.8,494.5 819.5,503.5 815.5,510.0 Z" fill="#f19e4c" stroke="#d6852f" stroke-width="1"/><circle cx="815.5" cy="485.5" r="7" fill="#fff" stroke="#e38c35" stroke-width="0.9"/>
<ellipse cx="925.6" cy="636.6" rx="13" ry="5.5" fill="#222" opacity="0.35" filter="url(#blur)" transform="rotate(-25 925.6 636.6)"/><path d="M914.6,641.6 C910.6,635.1 901.3,626.1 901.3,617.1 A13.3,13.3 0 1 1 927.9,617.1 C927.9,626.1 918.6,635.1 914.6,641.6 Z" fill="#f19e4c" stroke="#d6852f" stroke-width="1"/><circle cx="914.6" cy="617.1" r="7" fill="#fff" stroke="#e38c35" stroke-width="0.9"/>
</svg>
<div style="position:absolute;left:10px;top:11px;width:30px;height:59px;background:#fff;border:2px solid rgba(0,0,0,0.2);border-radius:4px;background-clip:padding-box"></div>
<div style="position:absolute;left:12px;top:40px;width:26px;height:1px;background:#ccc"></div>
<div style="position:absolute;left:18px;top:55px;width:13px;height:2px;background:#222"></div>
<div style="position:absolute;left:0;top:0;width:88px;height:23px;background:#fff;border-radius:0 0 8px 0"></div>
<div style="position:absolute;left:18px;top:28px;width:13px;height:2px;background:#222"></div>
<div style="position:absolute;left:23.5px;top:23px;width:2px;height:12px;background:#222"></div>
<svg style="position:absolute;left:7px;top:6px" width="11" height="11"><path d="M1 1 V10 H10" fill="none" stroke="#aaa" stroke-width="1"/><path d="M3 8 L9 2 M6.5 2 H9 V4.5" fill="none" stroke="#aaa" stroke-width="0.9"/></svg>
<div style="position:absolute;left:25px;top:6px;font-size:11px;color:#555;white-space:nowrap;line-height:1">Folium Map</div>
<div style="position:absolute;left:454px;top:365px;width:187px;height:12px;background:rgba(255,255,255,0.8)"></div>
<div style="position:absolute;left:457px;top:368px;width:10px;height:3px;background:#4c7be1"></div>
<div style="position:absolute;left:457px;top:371px;width:10px;height:3px;background:#ffd500"></div>
<div style="position:absolute;left:469px;top:366px;font-size:9.5px;color:#333;white-space:nowrap;line-height:1"><span style="color:#0078a8">Leaflet</span> | © <span style="color:#0078a8">OpenStreetMap</span> contributors</div>

</div>
</div>
</body></html>
